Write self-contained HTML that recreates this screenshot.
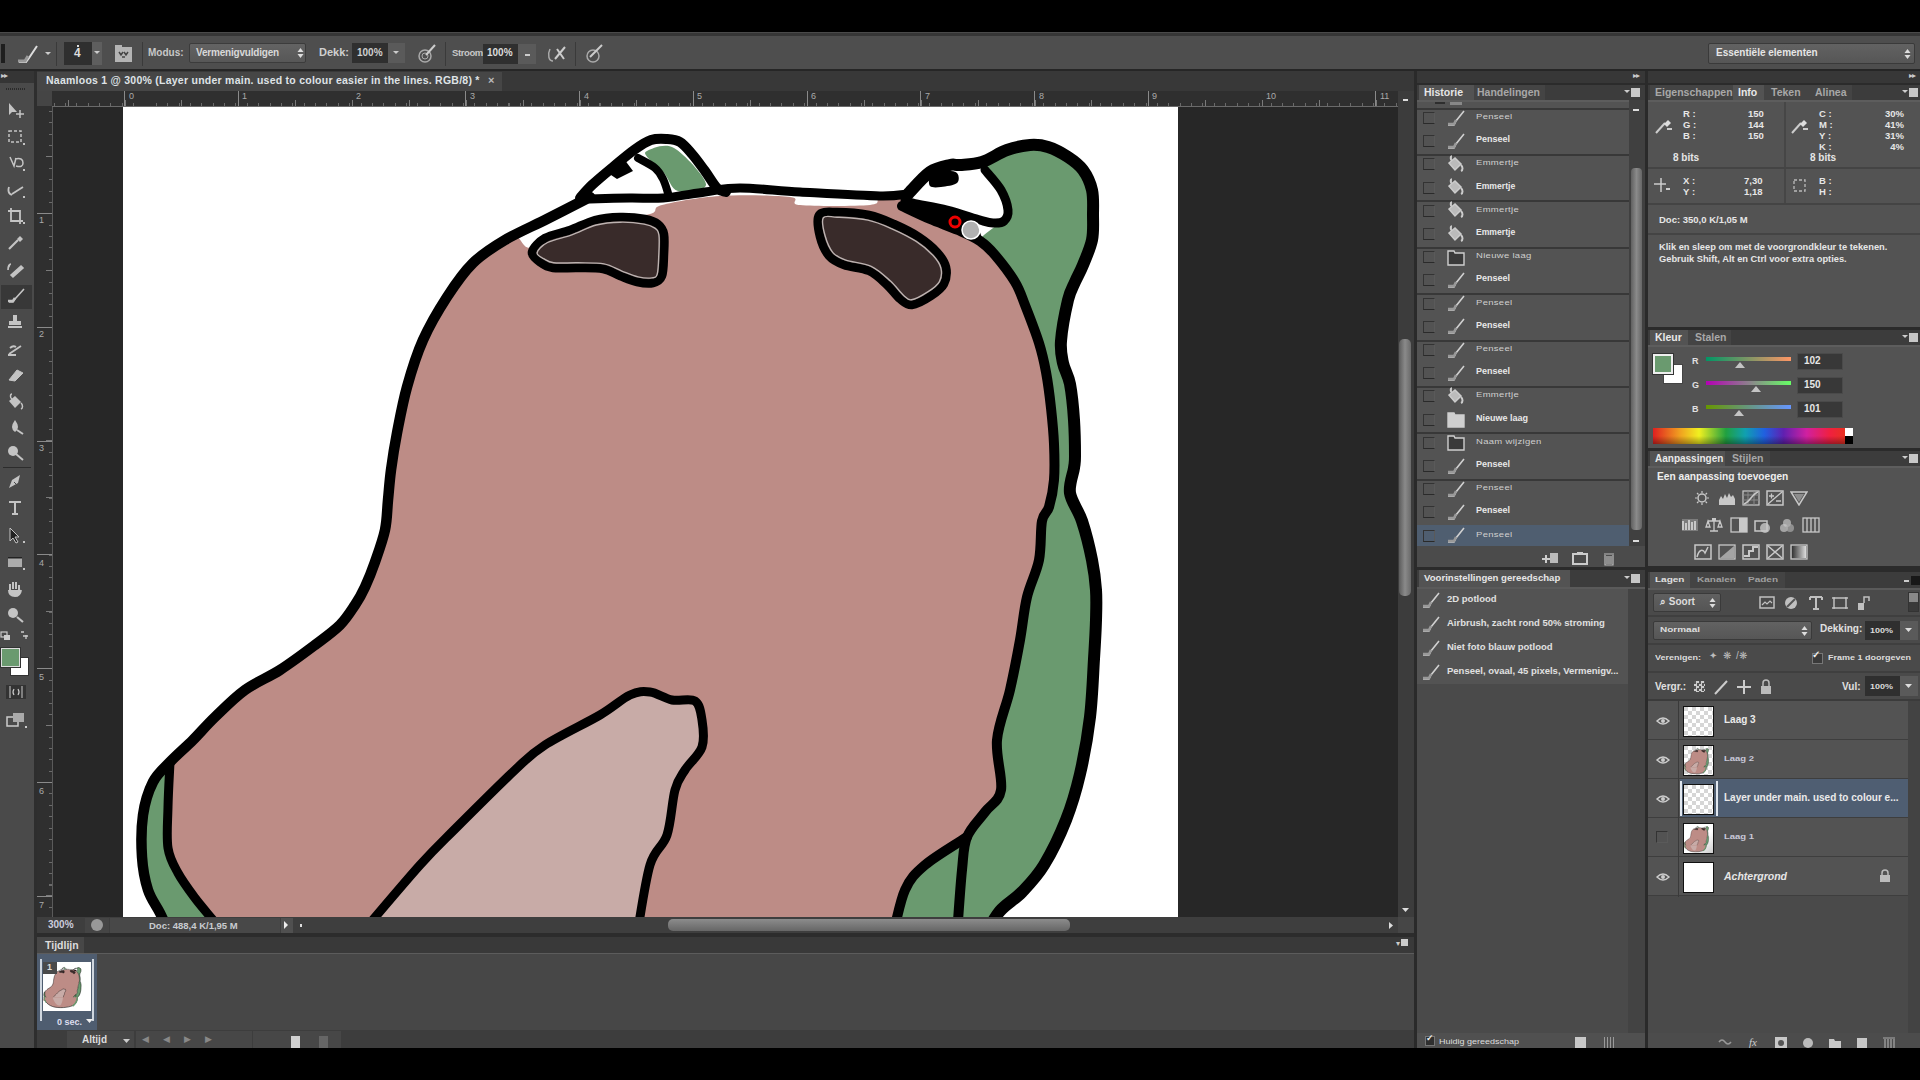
<!DOCTYPE html>
<html><head><meta charset="utf-8">
<style>
*{margin:0;padding:0;box-sizing:border-box}
html,body{width:1920px;height:1080px;overflow:hidden;background:#000;font-family:"Liberation Sans",sans-serif;color:#ddd;font-size:11px}
.a{position:absolute}
.t{position:absolute;white-space:nowrap;line-height:1}
</style></head><body>
<!-- options bar -->
<div class="a" style="left:0;top:32px;width:1920px;height:39px;background:#4e4e4e;border-bottom:2px solid #262626"></div>
<div class="a" style="left:0;top:32px;width:1920px;height:1px;background:#4a4a4a"></div>
<div class="a" style="left:0;top:33px;width:1920px;height:3px;background:#363636"></div>
<div class="a" style="left:1px;top:44px;width:4px;height:19px;background:#1e1e1e"></div>
<svg class="a" style="left:16px;top:43px" width="40" height="22"><path d="M3,19 L10,19 L13,15 L21,3" stroke="#ddd" stroke-width="2" fill="none"/><path d="M2,18 L9,18 L12,13" stroke="#999" stroke-width="3" fill="none"/><path d="M29,9 h6 l-3,3z" fill="#ccc"/></svg>
<div class="a" style="left:56px;top:42px;width:1px;height:24px;background:#3a3a3a"></div>
<div class="a" style="left:64px;top:42px;width:28px;height:23px;background:#2f2f2f"></div>
<div class="a" style="left:92px;top:42px;width:10px;height:23px;background:#5e5e5e"></div>
<div class="t" style="left:74px;top:47px;font-size:12px;font-weight:bold;color:#ddd">4</div>
<div class="a" style="left:77px;top:45px;width:2px;height:2px;background:#ddd"></div>
<svg class="a" style="left:94px;top:51px" width="8" height="6"><path d="M0,0h6l-3,3z" fill="#ccc"/></svg>

<svg class="a" style="left:115px;top:45px" width="17" height="17"><rect x="0" y="2" width="17" height="15" fill="#b4b4b4"/><rect x="0" y="0" width="7" height="3" fill="#b4b4b4"/><path d="M4,7 l2,3 2,-3 M9,7 l2,3 2,-3 M7,12 h3" stroke="#444" stroke-width="1.5" fill="none"/></svg>
<div class="a" style="left:142px;top:42px;width:1px;height:24px;background:#3a3a3a"></div>
<div class="t" style="left:148px;top:48px;font-size:10px;font-weight:bold;color:#c8c8c8">Modus:</div>
<div class="a" style="left:189px;top:43px;width:117px;height:20px;background:linear-gradient(#636363,#575757);border:1px solid #3c3c3c;border-radius:2px"></div>
<div class="t" style="left:196px;top:48px;font-size:10px;font-weight:bold;color:#d8d8d8;letter-spacing:-.2px">Vermenigvuldigen</div>
<svg class="a" style="left:297px;top:47px" width="7" height="12"><path d="M0.5,5 L3.5,1 L6.5,5z M0.5,7 L3.5,11 L6.5,7z" fill="#ddd"/></svg>
<div class="t" style="left:319px;top:47px;font-size:11px;font-weight:bold;color:#d0d0d0">Dekk:</div>
<div class="a" style="left:352px;top:43px;width:36px;height:20px;background:#2f2f2f"></div>
<div class="a" style="left:388px;top:43px;width:17px;height:20px;background:#5a5a5a"></div>
<div class="t" style="left:357px;top:48px;font-size:10px;font-weight:bold;color:#cfcfcf">100%</div>
<svg class="a" style="left:393px;top:51px" width="8" height="6"><path d="M0,0h6l-3,3z" fill="#ccc"/></svg>
<svg class="a" style="left:416px;top:43px" width="22" height="22"><circle cx="9" cy="13" r="6" stroke="#aaa" stroke-width="1.5" fill="none"/><circle cx="9" cy="13" r="3" stroke="#aaa" stroke-width="1" fill="none"/><path d="M10,12 L19,2" stroke="#ccc" stroke-width="2"/></svg>
<div class="a" style="left:445px;top:42px;width:1px;height:24px;background:#3a3a3a"></div>
<div class="t" style="left:452px;top:48px;font-size:9.5px;font-weight:bold;color:#c8c8c8;letter-spacing:-.4px">Stroom:</div>
<div class="a" style="left:483px;top:44px;width:35px;height:20px;background:#2f2f2f"></div>
<div class="a" style="left:518px;top:44px;width:18px;height:20px;background:#5a5a5a"></div>
<div class="t" style="left:487px;top:48px;font-size:10px;font-weight:bold;color:#dcdcdc">100%</div>
<div class="a" style="left:525px;top:54px;width:5px;height:2px;background:#ccc"></div>
<svg class="a" style="left:547px;top:43px" width="22" height="22"><path d="M3,6 C0,12 2,18 6,18" stroke="#aaa" stroke-width="1.5" fill="none"/><path d="M8,16 L18,4 M10,6 L17,16" stroke="#ccc" stroke-width="2"/></svg>
<div class="a" style="left:575px;top:42px;width:1px;height:24px;background:#3a3a3a"></div>
<svg class="a" style="left:584px;top:43px" width="22" height="22"><circle cx="9" cy="13" r="6" stroke="#aaa" stroke-width="1.5" fill="none"/><path d="M6,14 L18,2" stroke="#ccc" stroke-width="2"/></svg>
<div class="a" style="left:1708px;top:43px;width:207px;height:21px;background:linear-gradient(#626262,#565656);border:1px solid #3a3a3a;border-radius:2px"></div>
<div class="t" style="left:1716px;top:48px;font-size:10px;font-weight:bold;color:#e6e6e6">Essentiële elementen</div>
<svg class="a" style="left:1904px;top:48px" width="7" height="12"><path d="M0.5,5 L3.5,1 L6.5,5z M0.5,7 L3.5,11 L6.5,7z" fill="#ddd"/></svg>

<!-- toolbar -->
<div class="a" style="left:0;top:71px;width:34px;height:977px;background:#4a4a4a"></div>
<div class="a" style="left:0;top:71px;width:34px;height:12px;background:#353535"></div>
<div class="t" style="left:1px;top:72px;font-size:8px;color:#ccc;letter-spacing:-1px">&#9656;&#9656;</div>
<div class="a" style="left:6px;top:88px;width:19px;height:2px;background:repeating-linear-gradient(90deg,#2a2a2a 0 1px,transparent 1px 2px)"></div>
<div class="a" style="left:34px;top:71px;width:3px;height:977px;background:#2e2e2e"></div>
<div class="a" style="left:1px;top:285px;width:31px;height:24px;background:#383838"></div>
<div class="a" style="left:3px;top:467px;width:28px;height:1px;background:#2c2c2c"></div>
<svg class="a" style="left:6px;top:101px" width="20" height="18"><path d="M3,2 v12 l3,-3 h5z" fill="#c4c4c4"/><path d="M10,13 h8 M14,9 v8" stroke="#c4c4c4" stroke-width="1.5"/></svg>
<svg class="a" style="left:6px;top:128px" width="20" height="18"><rect x="3" y="3" width="12" height="11" fill="none" stroke="#c4c4c4" stroke-width="1.5" stroke-dasharray="3,2"/><rect x="17" y="15" width="2" height="2" fill="#c4c4c4"/></svg>
<svg class="a" style="left:6px;top:154px" width="20" height="18"><path d="M4,3 l4,9 l2,-8 M9,5 q8,-2 8,4 q0,5 -7,3" stroke="#c4c4c4" stroke-width="1.5" fill="none"/><rect x="17" y="15" width="2" height="2" fill="#c4c4c4"/></svg>
<svg class="a" style="left:6px;top:181px" width="20" height="18"><path d="M3,6 q-2,6 3,8 M6,13 l11,-7" stroke="#c4c4c4" stroke-width="1.8" fill="none"/><rect x="17" y="15" width="2" height="2" fill="#c4c4c4"/></svg>
<svg class="a" style="left:6px;top:207px" width="20" height="18"><path d="M5,1 v13 h12 M2,4 h12 v13" stroke="#c4c4c4" stroke-width="1.8" fill="none"/><rect x="17" y="15" width="2" height="2" fill="#c4c4c4"/></svg>
<svg class="a" style="left:6px;top:234px" width="20" height="18"><path d="M3,15 l9,-9" stroke="#c4c4c4" stroke-width="2.2"/><path d="M11,5 l3,-3 3,3 -3,3z" fill="#c4c4c4"/></svg>
<svg class="a" style="left:6px;top:261px" width="20" height="18"><path d="M2,9 q0,-6 3,-6 M5,14 l10,-9 2,2 -10,9z" stroke="#c4c4c4" stroke-width="1.6" fill="#c4c4c4"/></svg>
<svg class="a" style="left:6px;top:287px" width="20" height="18"><path d="M3,15 l4,0 2,-3 9,-10" stroke="#c4c4c4" stroke-width="1.6" fill="none"/><path d="M2,14 h5 l2,-3" stroke="#c4c4c4" stroke-width="2.5" fill="none"/></svg>
<svg class="a" style="left:6px;top:313px" width="20" height="18"><rect x="7" y="2" width="4" height="6" fill="#c4c4c4"/><rect x="3" y="8" width="12" height="4" fill="#c4c4c4"/><rect x="2" y="13" width="14" height="2" fill="#c4c4c4"/></svg>
<svg class="a" style="left:6px;top:340px" width="20" height="18"><path d="M3,14 l12,-8 M4,8 q3,-3 6,-1" stroke="#c4c4c4" stroke-width="1.8" fill="none"/><rect x="2" y="14" width="8" height="2" fill="#c4c4c4"/></svg>
<svg class="a" style="left:6px;top:366px" width="20" height="18"><path d="M3,14 l8,-10 6,3 -8,8z" fill="#c4c4c4" stroke="#c4c4c4" stroke-width="1"/></svg>
<svg class="a" style="left:6px;top:392px" width="20" height="18"><path d="M3,9 L9,4 L15,10 L9,16z" fill="#c4c4c4"/><path d="M6,2 C4,2 4,6 6,7 M15,11 C17,13 17,16 15,17" stroke="#c4c4c4" stroke-width="1.5" fill="none"/></svg>
<svg class="a" style="left:6px;top:418px" width="20" height="18"><path d="M9,2 q-6,8 0,12 q6,-4 0,-12z" fill="#c4c4c4"/><path d="M11,12 l6,4" stroke="#c4c4c4" stroke-width="2"/></svg>
<svg class="a" style="left:6px;top:444px" width="20" height="18"><circle cx="7" cy="7" r="5" fill="#c4c4c4"/><path d="M10,10 l7,6" stroke="#c4c4c4" stroke-width="2"/></svg>
<svg class="a" style="left:6px;top:473px" width="20" height="18"><path d="M3,15 l3,-8 8,-5 -2,8z" fill="#c4c4c4"/><path d="M8,9 l2,2" stroke="#4a4a4a" stroke-width="1" fill="#c4c4c4"/></svg>
<svg class="a" style="left:6px;top:499px" width="20" height="18"><path d="M3,3 h12 M9,3 v12 M6,15 h6" stroke="#c4c4c4" stroke-width="2" fill="#c4c4c4"/></svg>
<svg class="a" style="left:6px;top:526px" width="20" height="18"><path d="M4,2 v13 l3,-3 l3,5 2,-1 -3,-5 h4z" fill="#222" stroke="#c4c4c4" stroke-width="1" /><rect x="17" y="15" width="2" height="2" fill="#c4c4c4"/></svg>
<svg class="a" style="left:6px;top:553px" width="20" height="18"><rect x="2" y="5" width="14" height="9" fill="#c4c4c4" opacity=".8"/><rect x="2" y="4" width="14" height="1.5" fill="#222"/><rect x="17" y="15" width="2" height="2" fill="#c4c4c4"/></svg>
<svg class="a" style="left:6px;top:580px" width="20" height="18"><path d="M4,10 v-6 M7,9 v-7 M10,9 v-7 M13,10 v-5 M3,10 q0,6 6,6 q5,0 6,-6" stroke="#c4c4c4" stroke-width="2" fill="#c4c4c4"/></svg>
<svg class="a" style="left:6px;top:606px" width="20" height="18"><circle cx="7" cy="7" r="5" fill="#c4c4c4"/><path d="M11,11 l6,5" stroke="#c4c4c4" stroke-width="2.2"/></svg>
<svg class="a" style="left:0px;top:630px" width="34" height="14"><rect x="1" y="2" width="6" height="5" fill="none" stroke="#ccc" stroke-width="1.2"/><rect x="4" y="5" width="6" height="5" fill="#ccc"/><path d="M21,2 h3 M26,5 v4 M23,6 h5" stroke="#ccc" stroke-width="1.3"/></svg>
<div class="a" style="left:10px;top:657px;width:19px;height:19px;background:#fff;border:1px solid #333"></div>
<div class="a" style="left:1px;top:648px;width:19px;height:19px;background:#6a9a6f;border:1px solid #ddd;box-shadow:0 0 0 1px #333"></div>
<svg class="a" style="left:5px;top:684px" width="24" height="16"><rect x="1" y="1" width="20" height="14" fill="#333"/><path d="M5,2 v12 M17,2 v12" stroke="#ccc" stroke-width="1"/><path d="M9,5 q-2,3 0,6 M13,5 q2,3 0,6" stroke="#ccc" stroke-width="1.2" fill="none"/></svg>
<svg class="a" style="left:5px;top:711px" width="24" height="18"><rect x="2" y="6" width="11" height="9" fill="none" stroke="#ccc" stroke-width="1.5"/><rect x="8" y="2" width="11" height="9" fill="#aaa"/><rect x="20" y="15" width="2" height="2" fill="#ccc"/></svg>

<!-- document area -->
<div class="a" style="left:37px;top:71px;width:1377px;height:20px;background:#383838"></div>
<div class="a" style="left:37px;top:72px;width:465px;height:19px;background:#464646"></div>
<div class="t" style="left:46px;top:75px;font-size:10.5px;font-weight:bold;color:#dfe3e6;letter-spacing:.25px">Naamloos 1 @ 300% (Layer under main. used to colour easier in the lines. RGB/8) *</div>
<div class="t" style="left:488px;top:75px;font-size:11px;font-weight:bold;color:#bbb">&#215;</div>
<div class="a" style="left:37px;top:91px;width:1361px;height:16px;background:#2f2f2f"></div>
<div class="a" style="left:53px;top:103px;width:1345px;height:3px;background:repeating-linear-gradient(90deg,transparent 0 0.5px,#6a6a6a 0.5px 1.5px,transparent 1.5px 11.375px)"></div>
<div class="a" style="left:53px;top:100px;width:1345px;height:6px;background:repeating-linear-gradient(90deg,transparent 0 14.7px,#7a7a7a 14.7px 15.7px,transparent 15.7px 56.875px)"></div>
<div class="a" style="left:53px;top:91px;width:1345px;height:15px;background:repeating-linear-gradient(90deg,transparent 0 71px,#8a8a8a 71px 72px,transparent 72px 113.75px)"></div>
<div class="a" style="left:37px;top:91px;width:15px;height:15px;background:#454545"></div>
<div class="a" style="left:52px;top:106px;width:1346px;height:1px;background:#6a6a6a"></div>
<div class="a" style="left:37px;top:107px;width:15px;height:810px;background:#2f2f2f"></div>
<div class="a" style="left:49px;top:107px;width:3px;height:810px;background:repeating-linear-gradient(180deg,transparent 0 4px,#6a6a6a 4px 5px,transparent 5px 11.375px)"></div>
<div class="a" style="left:46px;top:107px;width:6px;height:810px;background:repeating-linear-gradient(180deg,transparent 0 49px,#7a7a7a 49px 50px,transparent 50px 56.875px)"></div>
<div class="a" style="left:37px;top:107px;width:15px;height:810px;background:repeating-linear-gradient(180deg,transparent 0 106px,#8a8a8a 106px 107px,transparent 107px 113.75px)"></div>
<div class="a" style="left:52px;top:107px;width:1px;height:810px;background:#5a5a5a"></div>
<div class="a" style="left:53px;top:107px;width:1345px;height:810px;background:#272727"></div>
<div class="t" style="left:129px;top:92px;font-size:9px;color:#aaa">0</div>
<div class="t" style="left:242px;top:92px;font-size:9px;color:#aaa">1</div>
<div class="t" style="left:356px;top:92px;font-size:9px;color:#aaa">2</div>
<div class="t" style="left:470px;top:92px;font-size:9px;color:#aaa">3</div>
<div class="t" style="left:584px;top:92px;font-size:9px;color:#aaa">4</div>
<div class="t" style="left:697px;top:92px;font-size:9px;color:#aaa">5</div>
<div class="t" style="left:811px;top:92px;font-size:9px;color:#aaa">6</div>
<div class="t" style="left:925px;top:92px;font-size:9px;color:#aaa">7</div>
<div class="t" style="left:1039px;top:92px;font-size:9px;color:#aaa">8</div>
<div class="t" style="left:1152px;top:92px;font-size:9px;color:#aaa">9</div>
<div class="t" style="left:1266px;top:92px;font-size:9px;color:#aaa">10</div>
<div class="t" style="left:1380px;top:92px;font-size:9px;color:#aaa">11</div>
<div class="t" style="left:39px;top:216px;font-size:9px;color:#aaa">1</div>
<div class="t" style="left:39px;top:330px;font-size:9px;color:#aaa">2</div>
<div class="t" style="left:39px;top:444px;font-size:9px;color:#aaa">3</div>
<div class="t" style="left:39px;top:559px;font-size:9px;color:#aaa">4</div>
<div class="t" style="left:39px;top:673px;font-size:9px;color:#aaa">5</div>
<div class="t" style="left:39px;top:787px;font-size:9px;color:#aaa">6</div>
<div class="t" style="left:39px;top:901px;font-size:9px;color:#aaa">7</div>
<div class="a" style="left:1398px;top:91px;width:16px;height:826px;background:#3c3c3c"></div>
<div class="a" style="left:1399px;top:339px;width:12px;height:257px;border-radius:5px;background:linear-gradient(90deg,#5c5c5c,#8a8a8a 50%,#6a6a6a)"></div>
<div class="a" style="left:1403px;top:99px;width:5px;height:2px;background:#ddd"></div>
<svg class="a" style="left:1402px;top:908px" width="8" height="6"><path d="M0,0h7l-3.5,4z" fill="#ddd"/></svg>
<div class="a" style="left:37px;top:917px;width:1361px;height:16px;background:#3e3e3e"></div>
<div class="a" style="left:1398px;top:917px;width:16px;height:16px;background:#464646"></div>
<div class="a" style="left:668px;top:919px;width:402px;height:12px;border-radius:5px;background:linear-gradient(#8c8c8c,#666)"></div>
<svg class="a" style="left:1389px;top:922px" width="6" height="8"><path d="M0,0v7l4,-3.5z" fill="#ddd"/></svg>
<div class="t" style="left:48px;top:920px;font-size:10px;font-weight:bold;color:#ccd">300%</div>
<div class="a" style="left:85px;top:918px;width:24px;height:15px;background:#454545"></div>
<div class="a" style="left:91px;top:919px;width:12px;height:12px;border-radius:50%;background:#999"></div>
<div class="a" style="left:110px;top:918px;width:170px;height:15px;background:#484848"></div>
<div class="t" style="left:149px;top:921px;font-size:9.5px;font-weight:bold;color:#c9ccd0">Doc: 488,4 K/1,95 M</div>
<div class="a" style="left:281px;top:918px;width:12px;height:15px;background:#505050"></div>
<svg class="a" style="left:284px;top:921px" width="6" height="8"><path d="M0,0v8l4,-4z" fill="#eee"/></svg>
<div class="a" style="left:300px;top:924px;width:2px;height:3px;background:#ddd"></div>
<div class="a" style="left:37px;top:933px;width:1377px;height:4px;background:#2c2c2c"></div>
<!-- timeline -->
<div class="a" style="left:37px;top:937px;width:1377px;height:16px;background:#393939"></div>
<div class="a" style="left:37px;top:937px;width:47px;height:16px;background:#474747"></div>
<div class="t" style="left:45px;top:940px;font-size:10.5px;font-weight:bold;color:#ddd">Tijdlijn</div>
<div class="t" style="left:1396px;top:939px;font-size:8px;color:#ccc">&#9662;<span style="display:inline-block;width:7px;height:7px;background:#ccc;margin-left:1px"></span></div>
<div class="a" style="left:37px;top:953px;width:1377px;height:1px;background:#5c5c5c"></div>
<div class="a" style="left:37px;top:954px;width:1377px;height:76px;background:#474747"></div>
<div class="a" style="left:37px;top:954px;width:60px;height:76px;background:#4f5d70"></div>
<div class="a" style="left:40px;top:959px;width:2px;height:62px;background:#cfd6de"></div>
<div class="a" style="left:92px;top:959px;width:2px;height:62px;background:#cfd6de"></div>
<div class="a" style="left:43px;top:962px;width:48px;height:49px;background:#fff"></div>
<svg class="a" style="left:43px;top:962px" width="48" height="49" viewBox="120 2 1230 1256" preserveAspectRatio="none"><use href="#frog"/><path d="M146,905 C150,1010 260,1130 430,1160 C620,1190 820,1160 920,1100 C975,1060 1000,990 1005,905 Z" fill="#bd8c86"/><path d="M146,910 C150,1010 260,1130 430,1160 C620,1190 820,1160 920,1100 C975,1060 1000,990 1005,910" fill="none" stroke="#000" stroke-width="14"/><path d="M1000,905 C990,1010 940,1090 880,1130" fill="none" stroke="#6a9a6f" stroke-width="40"/><path d="M366,910 L634,910 C620,1000 600,1080 560,1120 C480,1120 420,1060 366,910Z" fill="#c8aba7"/><path d="M146,905 C148,960 170,1000 200,1040" fill="none" stroke="#6a9a6f" stroke-width="30"/></svg>
<div class="a" style="left:43px;top:962px;width:14px;height:12px;background:#4a4a4a"></div>
<div class="t" style="left:47px;top:963px;font-size:9px;font-weight:bold;color:#ddd">1</div>
<div class="t" style="left:57px;top:1018px;font-size:9px;font-weight:bold;color:#dde">0 sec.</div>
<svg class="a" style="left:86px;top:1019px" width="8" height="6"><path d="M0,0h7l-3.5,4z" fill="#eee"/></svg>
<div class="a" style="left:37px;top:1030px;width:1377px;height:18px;background:#3d3d3d"></div>
<div class="a" style="left:67px;top:1031px;width:67px;height:17px;background:#474747"></div>
<div class="t" style="left:82px;top:1035px;font-size:10px;font-weight:bold;color:#ddd">Altijd</div>
<svg class="a" style="left:123px;top:1039px" width="8" height="6"><path d="M0,0h7l-3.5,4z" fill="#ccc"/></svg>
<div class="a" style="left:136px;top:1031px;width:116px;height:17px;background:#474747"></div>
<div class="a" style="left:253px;top:1031px;width:88px;height:17px;background:#474747"></div>
<div class="t" style="left:142px;top:1035px;font-size:9px;color:#888;letter-spacing:14px">&#9664;&#9664;&#9654;&#9654;</div>
<div class="a" style="left:291px;top:1036px;width:9px;height:12px;background:#cfcfcf"></div>
<div class="a" style="left:319px;top:1036px;width:9px;height:12px;background:#666"></div>
<div class="a" style="left:1414px;top:71px;width:3px;height:977px;background:#2a2a2a"></div>
<!-- history column -->
<div class="a" style="left:1417px;top:71px;width:228px;height:977px;background:#4a4a4a"></div>
<div class="a" style="left:1417px;top:71px;width:228px;height:12px;background:#373737"></div>
<div class="t" style="left:1633px;top:72px;font-size:8px;color:#ccc;letter-spacing:-1px">&#9656;&#9656;</div>
<div class="a" style="left:1417px;top:83px;width:228px;height:2px;background:#2b2b2b"></div>
<div class="a" style="left:1417px;top:85px;width:228px;height:15px;background:#3c3c3c"></div>
<div class="a" style="left:1419px;top:85px;width:55px;height:16px;background:#535353"></div>
<div class="a" style="left:1474px;top:85px;width:71px;height:15px;background:#444"></div>
<div class="t" style="left:1424px;top:87px;font-size:10.5px;font-weight:bold;color:#e6e6e6">Historie</div>
<div class="t" style="left:1477px;top:87px;font-size:10.5px;font-weight:bold;color:#a8a8a8">Handelingen</div>
<svg class="a" style="left:1624px;top:88px" width="18" height="10"><path d="M0,2h6l-3,3z" fill="#ccc"/><rect x="7" y="0" width="9" height="9" fill="#c8c8c8"/></svg>
<div class="a" style="left:1417px;top:100px;width:212px;height:446px;background:#535353"></div>
<div class="a" style="left:1417px;top:100px;width:212px;height:2px;background:#5d5d5d"></div>
<div class="a" style="left:1435px;top:102px;width:10px;height:2px;background:#2e2e2e"></div>
<div class="a" style="left:1450px;top:102px;width:12px;height:3px;background:#888"></div>
<div class="a" style="left:1417px;top:108px;width:212px;height:2px;background:#383838"></div>
<div class="a" style="left:1417px;top:154px;width:212px;height:2px;background:#383838"></div>
<div class="a" style="left:1417px;top:200px;width:212px;height:2px;background:#383838"></div>
<div class="a" style="left:1417px;top:247px;width:212px;height:2px;background:#383838"></div>
<div class="a" style="left:1417px;top:293px;width:212px;height:2px;background:#383838"></div>
<div class="a" style="left:1417px;top:340px;width:212px;height:2px;background:#383838"></div>
<div class="a" style="left:1417px;top:386px;width:212px;height:2px;background:#383838"></div>
<div class="a" style="left:1417px;top:432px;width:212px;height:2px;background:#383838"></div>
<div class="a" style="left:1417px;top:479px;width:212px;height:2px;background:#383838"></div>
<div class="a" style="left:1417px;top:525px;width:212px;height:2px;background:#383838"></div>
<div class="a" style="left:1417px;top:525px;width:212px;height:21px;background:#4f5e70"></div>
<div class="a" style="left:1423px;top:112px;width:12px;height:12px;border:1px solid #333;border-right-color:#5a5a5a;border-bottom-color:#2a2a2a"></div>
<svg class="a" style="left:1446px;top:109px" width="20" height="18"><path d="M2,16 L8,16 L10,12 L18,2" stroke="#d0d0d0" stroke-width="1.6" fill="none"/><path d="M2,15 L8,15 L10,11" stroke="#999" stroke-width="2.5" fill="none"/></svg>
<div class="t" style="left:1476px;top:112px;font-size:9.5px;color:#cfcfcf;letter-spacing:.3px;transform:scaleY(.7)">Penseel</div>
<div class="a" style="left:1423px;top:135px;width:12px;height:12px;border:1px solid #333;border-right-color:#5a5a5a;border-bottom-color:#2a2a2a"></div>
<svg class="a" style="left:1446px;top:132px" width="20" height="18"><path d="M2,16 L8,16 L10,12 L18,2" stroke="#d0d0d0" stroke-width="1.6" fill="none"/><path d="M2,15 L8,15 L10,11" stroke="#999" stroke-width="2.5" fill="none"/></svg>
<div class="t" style="left:1476px;top:135px;font-size:9px;font-weight:bold;color:#e8e8e8">Penseel</div>
<div class="a" style="left:1423px;top:158px;width:12px;height:12px;border:1px solid #333;border-right-color:#5a5a5a;border-bottom-color:#2a2a2a"></div>
<svg class="a" style="left:1446px;top:154px" width="20" height="20"><path d="M6,2 C4,2 4,6 6,7 M3,9 L9,4 L15,10 L9,16z" stroke="#ccc" stroke-width="1.5" fill="#bbb"/><path d="M15,11 C17,13 17,16 15,17" stroke="#ccc" stroke-width="2" fill="none"/></svg>
<div class="t" style="left:1476px;top:158px;font-size:9.5px;color:#cfcfcf;letter-spacing:.3px;transform:scaleY(.7)">Emmertje</div>
<div class="a" style="left:1423px;top:182px;width:12px;height:12px;border:1px solid #333;border-right-color:#5a5a5a;border-bottom-color:#2a2a2a"></div>
<svg class="a" style="left:1446px;top:177px" width="20" height="20"><path d="M6,2 C4,2 4,6 6,7 M3,9 L9,4 L15,10 L9,16z" stroke="#ccc" stroke-width="1.5" fill="#bbb"/><path d="M15,11 C17,13 17,16 15,17" stroke="#ccc" stroke-width="2" fill="none"/></svg>
<div class="t" style="left:1476px;top:182px;font-size:8.6px;font-weight:bold;color:#e8e8e8">Emmertje</div>
<div class="a" style="left:1423px;top:205px;width:12px;height:12px;border:1px solid #333;border-right-color:#5a5a5a;border-bottom-color:#2a2a2a"></div>
<svg class="a" style="left:1446px;top:200px" width="20" height="20"><path d="M6,2 C4,2 4,6 6,7 M3,9 L9,4 L15,10 L9,16z" stroke="#ccc" stroke-width="1.5" fill="#bbb"/><path d="M15,11 C17,13 17,16 15,17" stroke="#ccc" stroke-width="2" fill="none"/></svg>
<div class="t" style="left:1476px;top:205px;font-size:9.5px;color:#cfcfcf;letter-spacing:.3px;transform:scaleY(.7)">Emmertje</div>
<div class="a" style="left:1423px;top:228px;width:12px;height:12px;border:1px solid #333;border-right-color:#5a5a5a;border-bottom-color:#2a2a2a"></div>
<svg class="a" style="left:1446px;top:224px" width="20" height="20"><path d="M6,2 C4,2 4,6 6,7 M3,9 L9,4 L15,10 L9,16z" stroke="#ccc" stroke-width="1.5" fill="#bbb"/><path d="M15,11 C17,13 17,16 15,17" stroke="#ccc" stroke-width="2" fill="none"/></svg>
<div class="t" style="left:1476px;top:228px;font-size:8.6px;font-weight:bold;color:#e8e8e8">Emmertje</div>
<div class="a" style="left:1423px;top:251px;width:12px;height:12px;border:1px solid #333;border-right-color:#5a5a5a;border-bottom-color:#2a2a2a"></div>
<svg class="a" style="left:1446px;top:248px" width="20" height="18"><path d="M2,3 h6 l1,2 h9 v12 h-16z" stroke="#cfcfcf" stroke-width="1.4" fill="#3a3a3a"/></svg>
<div class="t" style="left:1476px;top:251px;font-size:9.5px;color:#cfcfcf;letter-spacing:.3px;transform:scaleY(.7)">Nieuwe laag</div>
<div class="a" style="left:1423px;top:274px;width:12px;height:12px;border:1px solid #333;border-right-color:#5a5a5a;border-bottom-color:#2a2a2a"></div>
<svg class="a" style="left:1446px;top:271px" width="20" height="18"><path d="M2,16 L8,16 L10,12 L18,2" stroke="#d0d0d0" stroke-width="1.6" fill="none"/><path d="M2,15 L8,15 L10,11" stroke="#999" stroke-width="2.5" fill="none"/></svg>
<div class="t" style="left:1476px;top:274px;font-size:9px;font-weight:bold;color:#e8e8e8">Penseel</div>
<div class="a" style="left:1423px;top:298px;width:12px;height:12px;border:1px solid #333;border-right-color:#5a5a5a;border-bottom-color:#2a2a2a"></div>
<svg class="a" style="left:1446px;top:294px" width="20" height="18"><path d="M2,16 L8,16 L10,12 L18,2" stroke="#d0d0d0" stroke-width="1.6" fill="none"/><path d="M2,15 L8,15 L10,11" stroke="#999" stroke-width="2.5" fill="none"/></svg>
<div class="t" style="left:1476px;top:298px;font-size:9.5px;color:#cfcfcf;letter-spacing:.3px;transform:scaleY(.7)">Penseel</div>
<div class="a" style="left:1423px;top:321px;width:12px;height:12px;border:1px solid #333;border-right-color:#5a5a5a;border-bottom-color:#2a2a2a"></div>
<svg class="a" style="left:1446px;top:317px" width="20" height="18"><path d="M2,16 L8,16 L10,12 L18,2" stroke="#d0d0d0" stroke-width="1.6" fill="none"/><path d="M2,15 L8,15 L10,11" stroke="#999" stroke-width="2.5" fill="none"/></svg>
<div class="t" style="left:1476px;top:321px;font-size:9px;font-weight:bold;color:#e8e8e8">Penseel</div>
<div class="a" style="left:1423px;top:344px;width:12px;height:12px;border:1px solid #333;border-right-color:#5a5a5a;border-bottom-color:#2a2a2a"></div>
<svg class="a" style="left:1446px;top:341px" width="20" height="18"><path d="M2,16 L8,16 L10,12 L18,2" stroke="#d0d0d0" stroke-width="1.6" fill="none"/><path d="M2,15 L8,15 L10,11" stroke="#999" stroke-width="2.5" fill="none"/></svg>
<div class="t" style="left:1476px;top:344px;font-size:9.5px;color:#cfcfcf;letter-spacing:.3px;transform:scaleY(.7)">Penseel</div>
<div class="a" style="left:1423px;top:367px;width:12px;height:12px;border:1px solid #333;border-right-color:#5a5a5a;border-bottom-color:#2a2a2a"></div>
<svg class="a" style="left:1446px;top:364px" width="20" height="18"><path d="M2,16 L8,16 L10,12 L18,2" stroke="#d0d0d0" stroke-width="1.6" fill="none"/><path d="M2,15 L8,15 L10,11" stroke="#999" stroke-width="2.5" fill="none"/></svg>
<div class="t" style="left:1476px;top:367px;font-size:9px;font-weight:bold;color:#e8e8e8">Penseel</div>
<div class="a" style="left:1423px;top:390px;width:12px;height:12px;border:1px solid #333;border-right-color:#5a5a5a;border-bottom-color:#2a2a2a"></div>
<svg class="a" style="left:1446px;top:386px" width="20" height="20"><path d="M6,2 C4,2 4,6 6,7 M3,9 L9,4 L15,10 L9,16z" stroke="#ccc" stroke-width="1.5" fill="#bbb"/><path d="M15,11 C17,13 17,16 15,17" stroke="#ccc" stroke-width="2" fill="none"/></svg>
<div class="t" style="left:1476px;top:390px;font-size:9.5px;color:#cfcfcf;letter-spacing:.3px;transform:scaleY(.7)">Emmertje</div>
<div class="a" style="left:1423px;top:414px;width:12px;height:12px;border:1px solid #333;border-right-color:#5a5a5a;border-bottom-color:#2a2a2a"></div>
<svg class="a" style="left:1446px;top:410px" width="20" height="18"><path d="M2,3 h6 l1,2 h9 v12 h-16z" stroke="#cfcfcf" stroke-width="1.4" fill="#cfcfcf"/></svg>
<div class="t" style="left:1476px;top:414px;font-size:9px;font-weight:bold;color:#e8e8e8">Nieuwe laag</div>
<div class="a" style="left:1423px;top:437px;width:12px;height:12px;border:1px solid #333;border-right-color:#5a5a5a;border-bottom-color:#2a2a2a"></div>
<svg class="a" style="left:1446px;top:433px" width="20" height="18"><path d="M2,3 h6 l1,2 h9 v12 h-16z" stroke="#cfcfcf" stroke-width="1.4" fill="#3a3a3a"/></svg>
<div class="t" style="left:1476px;top:437px;font-size:9.5px;color:#cfcfcf;letter-spacing:.3px;transform:scaleY(.7)">Naam wijzigen</div>
<div class="a" style="left:1423px;top:460px;width:12px;height:12px;border:1px solid #333;border-right-color:#5a5a5a;border-bottom-color:#2a2a2a"></div>
<svg class="a" style="left:1446px;top:457px" width="20" height="18"><path d="M2,16 L8,16 L10,12 L18,2" stroke="#d0d0d0" stroke-width="1.6" fill="none"/><path d="M2,15 L8,15 L10,11" stroke="#999" stroke-width="2.5" fill="none"/></svg>
<div class="t" style="left:1476px;top:460px;font-size:9px;font-weight:bold;color:#e8e8e8">Penseel</div>
<div class="a" style="left:1423px;top:483px;width:12px;height:12px;border:1px solid #333;border-right-color:#5a5a5a;border-bottom-color:#2a2a2a"></div>
<svg class="a" style="left:1446px;top:480px" width="20" height="18"><path d="M2,16 L8,16 L10,12 L18,2" stroke="#d0d0d0" stroke-width="1.6" fill="none"/><path d="M2,15 L8,15 L10,11" stroke="#999" stroke-width="2.5" fill="none"/></svg>
<div class="t" style="left:1476px;top:483px;font-size:9.5px;color:#cfcfcf;letter-spacing:.3px;transform:scaleY(.7)">Penseel</div>
<div class="a" style="left:1423px;top:506px;width:12px;height:12px;border:1px solid #333;border-right-color:#5a5a5a;border-bottom-color:#2a2a2a"></div>
<svg class="a" style="left:1446px;top:503px" width="20" height="18"><path d="M2,16 L8,16 L10,12 L18,2" stroke="#d0d0d0" stroke-width="1.6" fill="none"/><path d="M2,15 L8,15 L10,11" stroke="#999" stroke-width="2.5" fill="none"/></svg>
<div class="t" style="left:1476px;top:506px;font-size:9px;font-weight:bold;color:#e8e8e8">Penseel</div>
<div class="a" style="left:1423px;top:530px;width:12px;height:12px;border:1px solid #333;border-right-color:#5a5a5a;border-bottom-color:#2a2a2a"></div>
<svg class="a" style="left:1446px;top:526px" width="20" height="18"><path d="M2,16 L8,16 L10,12 L18,2" stroke="#d0d0d0" stroke-width="1.6" fill="none"/><path d="M2,15 L8,15 L10,11" stroke="#999" stroke-width="2.5" fill="none"/></svg>
<div class="t" style="left:1476px;top:530px;font-size:9.5px;color:#cfcfcf;letter-spacing:.3px;transform:scaleY(.7)">Penseel</div>
<div class="a" style="left:1629px;top:100px;width:16px;height:446px;background:#404040"></div>
<div class="a" style="left:1633px;top:109px;width:6px;height:2px;background:#ddd"></div>
<div class="a" style="left:1631px;top:168px;width:11px;height:362px;border-radius:4px;background:linear-gradient(90deg,#606060,#8a8a8a 50%,#666)"></div>
<div class="a" style="left:1633px;top:540px;width:6px;height:2px;background:#ddd"></div>
<div class="a" style="left:1417px;top:546px;width:228px;height:21px;background:#4b4b4b"></div>
<svg class="a" style="left:1540px;top:550px" width="90" height="16"><path d="M2,9 h8 M6,5 v8" stroke="#ccc" stroke-width="2"/><rect x="10" y="3" width="8" height="10" fill="#bbb"/><rect x="33" y="4" width="14" height="10" fill="none" stroke="#ccc" stroke-width="2"/><rect x="37" y="2" width="6" height="3" fill="#ccc"/><path d="M64,4 h10 M65,5 v10 h8 v-10 M67,6 v8 M69,6 v8 M71,6 v8" stroke="#bbb" stroke-width="1.2" fill="none"/></svg>
<div class="a" style="left:1417px;top:567px;width:228px;height:3px;background:#2b2b2b"></div>
<div class="a" style="left:1417px;top:570px;width:228px;height:17px;background:#3c3c3c"></div>
<div class="a" style="left:1419px;top:570px;width:151px;height:18px;background:#535353"></div>
<div class="t" style="left:1424px;top:573px;font-size:9.6px;font-weight:bold;color:#e6e6e6">Voorinstellingen gereedschap</div>
<svg class="a" style="left:1624px;top:574px" width="18" height="10"><path d="M0,2h6l-3,3z" fill="#ccc"/><rect x="7" y="0" width="9" height="9" fill="#c8c8c8"/></svg>
<div class="a" style="left:1417px;top:587px;width:228px;height:2px;background:#5a5a5a"></div>
<div class="a" style="left:1417px;top:589px;width:211px;height:95px;background:#535353"></div>
<div class="a" style="left:1628px;top:589px;width:17px;height:444px;background:#434343"></div>
<svg class="a" style="left:1421px;top:591px" width="20" height="18"><path d="M2,16 L8,16 L10,12 L18,2" stroke="#d0d0d0" stroke-width="1.6" fill="none"/><path d="M2,15 L8,15 L10,11" stroke="#999" stroke-width="2.5" fill="none"/></svg>
<div class="t" style="left:1447px;top:594px;font-size:9.5px;font-weight:bold;color:#e0e0e0">2D potlood</div>
<svg class="a" style="left:1421px;top:615px" width="20" height="18"><path d="M2,16 L8,16 L10,12 L18,2" stroke="#d0d0d0" stroke-width="1.6" fill="none"/><path d="M2,15 L8,15 L10,11" stroke="#999" stroke-width="2.5" fill="none"/></svg>
<div class="t" style="left:1447px;top:618px;font-size:9.5px;font-weight:bold;color:#e0e0e0">Airbrush, zacht rond 50% stroming</div>
<svg class="a" style="left:1421px;top:639px" width="20" height="18"><path d="M2,16 L8,16 L10,12 L18,2" stroke="#d0d0d0" stroke-width="1.6" fill="none"/><path d="M2,15 L8,15 L10,11" stroke="#999" stroke-width="2.5" fill="none"/></svg>
<div class="t" style="left:1447px;top:642px;font-size:9.5px;font-weight:bold;color:#e0e0e0">Niet foto blauw potlood</div>
<svg class="a" style="left:1421px;top:663px" width="20" height="18"><path d="M2,16 L8,16 L10,12 L18,2" stroke="#d0d0d0" stroke-width="1.6" fill="none"/><path d="M2,15 L8,15 L10,11" stroke="#999" stroke-width="2.5" fill="none"/></svg>
<div class="t" style="left:1447px;top:666px;font-size:9.5px;font-weight:bold;color:#e0e0e0">Penseel, ovaal, 45 pixels, Vermenigv...</div>
<div class="a" style="left:1417px;top:1033px;width:228px;height:15px;background:#505050"></div>
<div class="a" style="left:1425px;top:1036px;width:10px;height:10px;background:#2f2f2f;border:1px solid #777"></div>
<div class="t" style="left:1426px;top:1034px;font-size:9px;font-weight:bold;color:#eee">&#10003;</div>
<div class="t" style="left:1439px;top:1037px;font-size:9px;color:#ddd;transform:scaleY(.8)">Huidig gereedschap</div>
<div class="a" style="left:1575px;top:1037px;width:11px;height:11px;background:#c8c8c8"></div>
<div class="a" style="left:1604px;top:1037px;width:10px;height:11px;background:repeating-linear-gradient(90deg,#999 0 1px,transparent 1px 3px)"></div>
<div class="a" style="left:1645px;top:71px;width:3px;height:977px;background:#2a2a2a"></div>
<!-- right column -->
<svg width="0" height="0" style="position:absolute"><defs><linearGradient id="gr1"><stop offset="0" stop-color="#333"/><stop offset="1" stop-color="#ddd"/></linearGradient></defs></svg>
<div class="a" style="left:1648px;top:71px;width:272px;height:977px;background:#4a4a4a;"></div>
<div class="a" style="left:1648px;top:71px;width:272px;height:12px;background:#373737;"></div>
<div class="t" style="left:1909px;top:72px;font-size:8px;color:#ccc;letter-spacing:-1px">&#9656;&#9656;</div>
<div class="a" style="left:1648px;top:83px;width:272px;height:2px;background:#2b2b2b;"></div>
<div class="a" style="left:1648px;top:85px;width:272px;height:15px;background:#3c3c3c;"></div>
<div class="a" style="left:1650px;top:85px;width:83px;height:15px;background:#444;"></div>
<div class="a" style="left:1733px;top:85px;width:31px;height:16px;background:#535353;"></div>
<div class="a" style="left:1764px;top:85px;width:39px;height:15px;background:#444;"></div>
<div class="a" style="left:1803px;top:85px;width:49px;height:15px;background:#444;"></div>
<div class="t" style="left:1655px;top:87px;font-size:10.5px;font-weight:bold;color:#a8a8a8;">Eigenschappen</div>
<div class="t" style="left:1738px;top:87px;font-size:10.5px;font-weight:bold;color:#e8e8e8;">Info</div>
<div class="t" style="left:1771px;top:87px;font-size:10.5px;font-weight:bold;color:#a8a8a8;">Teken</div>
<div class="t" style="left:1815px;top:87px;font-size:10.5px;font-weight:bold;color:#a8a8a8;">Alinea</div>
<svg class="a" style="left:1902px;top:88px" width="18" height="10"><path d="M0,2h6l-3,3z" fill="#ccc"/><rect x="7" y="0" width="9" height="9" fill="#c8c8c8"/></svg>
<div class="a" style="left:1648px;top:100px;width:272px;height:227px;background:#535353;"></div>
<div class="a" style="left:1648px;top:100px;width:272px;height:2px;background:#5d5d5d;"></div>
<div class="a" style="left:1784px;top:102px;width:2px;height:102px;background:#464646;"></div>
<div class="a" style="left:1648px;top:167px;width:272px;height:2px;background:#444;"></div>
<div class="a" style="left:1648px;top:203px;width:272px;height:2px;background:#444;"></div>
<div class="a" style="left:1648px;top:233px;width:272px;height:2px;background:#444;"></div>
<svg class="a" style="left:1655px;top:118px" width="18" height="16"><path d="M1,15 L10,5" stroke="#ccc" stroke-width="2"/><path d="M9,6 l4,-4 l3,3 l-4,4z" fill="#ddd"/><rect x="12" y="10" width="5" height="2" fill="#ccc"/></svg>
<svg class="a" style="left:1791px;top:118px" width="18" height="16"><path d="M1,15 L10,5" stroke="#ccc" stroke-width="2"/><path d="M9,6 l4,-4 l3,3 l-4,4z" fill="#ddd"/><rect x="12" y="10" width="5" height="2" fill="#ccc"/></svg>
<div class="t" style="left:1683px;top:109px;font-size:9.5px;font-weight:bold;color:#e6e6e6;">R&nbsp;:</div>
<div class="t" style="left:1748px;top:109px;font-size:9.5px;font-weight:bold;color:#e6e6e6;">150</div>
<div class="t" style="left:1683px;top:120px;font-size:9.5px;font-weight:bold;color:#e6e6e6;">G&nbsp;:</div>
<div class="t" style="left:1748px;top:120px;font-size:9.5px;font-weight:bold;color:#e6e6e6;">144</div>
<div class="t" style="left:1683px;top:131px;font-size:9.5px;font-weight:bold;color:#e6e6e6;">B&nbsp;:</div>
<div class="t" style="left:1748px;top:131px;font-size:9.5px;font-weight:bold;color:#e6e6e6;">150</div>
<div class="t" style="left:1819px;top:109px;font-size:9.5px;font-weight:bold;color:#e6e6e6;">C&nbsp;:</div>
<div class="t" style="right:16px;top:109px;font-size:9.5px;font-weight:bold;color:#e6e6e6">30%</div>
<div class="t" style="left:1819px;top:120px;font-size:9.5px;font-weight:bold;color:#e6e6e6;">M&nbsp;:</div>
<div class="t" style="right:16px;top:120px;font-size:9.5px;font-weight:bold;color:#e6e6e6">41%</div>
<div class="t" style="left:1819px;top:131px;font-size:9.5px;font-weight:bold;color:#e6e6e6;">Y&nbsp;:</div>
<div class="t" style="right:16px;top:131px;font-size:9.5px;font-weight:bold;color:#e6e6e6">31%</div>
<div class="t" style="left:1819px;top:142px;font-size:9.5px;font-weight:bold;color:#e6e6e6;">K&nbsp;:</div>
<div class="t" style="right:16px;top:142px;font-size:9.5px;font-weight:bold;color:#e6e6e6">4%</div>
<div class="t" style="left:1673px;top:153px;font-size:10px;font-weight:bold;color:#e6e6e6;">8 bits</div>
<div class="t" style="left:1810px;top:153px;font-size:10px;font-weight:bold;color:#e6e6e6;">8 bits</div>
<svg class="a" style="left:1654px;top:177px" width="18" height="16"><path d="M0,7 h12 M7,1 v14" stroke="#ccc" stroke-width="1.5"/><rect x="12" y="11" width="4" height="2" fill="#ccc"/></svg>
<div class="t" style="left:1683px;top:176px;font-size:9.5px;font-weight:bold;color:#e6e6e6;">X&nbsp;:</div>
<div class="t" style="left:1683px;top:187px;font-size:9.5px;font-weight:bold;color:#e6e6e6;">Y&nbsp;:</div>
<div class="t" style="left:1744px;top:176px;font-size:9.5px;font-weight:bold;color:#e6e6e6;">7,30</div>
<div class="t" style="left:1744px;top:187px;font-size:9.5px;font-weight:bold;color:#e6e6e6;">1,18</div>
<svg class="a" style="left:1792px;top:178px" width="16" height="16"><rect x="2" y="2" width="11" height="11" fill="none" stroke="#bbb" stroke-width="1.3" stroke-dasharray="3,2"/></svg>
<div class="t" style="left:1819px;top:176px;font-size:9.5px;font-weight:bold;color:#e6e6e6;">B&nbsp;:</div>
<div class="t" style="left:1819px;top:187px;font-size:9.5px;font-weight:bold;color:#e6e6e6;">H&nbsp;:</div>
<div class="t" style="left:1659px;top:215px;font-size:9.5px;font-weight:bold;color:#e6e6e6;">Doc: 350,0 K/1,05 M</div>
<div class="t" style="left:1659px;top:243px;font-size:9.3px;font-weight:bold;color:#e6e6e6;">Klik en sleep om met de voorgrondkleur te tekenen.</div>
<div class="t" style="left:1659px;top:255px;font-size:9.3px;font-weight:bold;color:#e6e6e6;">Gebruik Shift, Alt en Ctrl voor extra opties.</div>
<div class="a" style="left:1648px;top:327px;width:272px;height:3px;background:#2b2b2b;"></div>
<div class="a" style="left:1648px;top:330px;width:272px;height:15px;background:#3c3c3c;"></div>
<div class="a" style="left:1650px;top:330px;width:38px;height:16px;background:#535353;"></div>
<div class="a" style="left:1688px;top:330px;width:43px;height:15px;background:#444;"></div>
<div class="t" style="left:1655px;top:332px;font-size:10.5px;font-weight:bold;color:#e8e8e8;">Kleur</div>
<div class="t" style="left:1695px;top:332px;font-size:10.5px;font-weight:bold;color:#a8a8a8;">Stalen</div>
<svg class="a" style="left:1902px;top:333px" width="18" height="10"><path d="M0,2h6l-3,3z" fill="#ccc"/><rect x="7" y="0" width="9" height="9" fill="#c8c8c8"/></svg>
<div class="a" style="left:1648px;top:345px;width:272px;height:103px;background:#535353;"></div>
<div class="a" style="left:1648px;top:345px;width:272px;height:2px;background:#5d5d5d;"></div>
<div class="a" style="left:1663px;top:364px;width:20px;height:20px;background:#fff;border:1px solid #444"></div>
<div class="a" style="left:1653px;top:354px;width:20px;height:20px;background:#6a9a6f;border:2px solid #eee;box-shadow:0 0 0 1px #333"></div>
<div class="t" style="left:1692px;top:357px;font-size:9px;font-weight:bold;color:#e0e0e0;">R</div>
<div class="a" style="left:1706px;top:357px;width:85px;height:4px;background:linear-gradient(90deg,#009665,#ff9665);"></div>
<svg class="a" style="left:1735px;top:361px" width="10" height="8"><path d="M0,7 L5,1 L10,7z" fill="#c4c4c4"/></svg>
<div class="a" style="left:1797px;top:353px;width:46px;height:17px;background:#383838;border:1px solid #4a4a4a"></div>
<div class="t" style="left:1804px;top:356px;font-size:10px;font-weight:bold;color:#e6e6e6;">102</div>
<div class="t" style="left:1692px;top:381px;font-size:9px;font-weight:bold;color:#e0e0e0;">G</div>
<div class="a" style="left:1706px;top:381px;width:85px;height:4px;background:linear-gradient(90deg,#b400b4,#66ff65);"></div>
<svg class="a" style="left:1751px;top:385px" width="10" height="8"><path d="M0,7 L5,1 L10,7z" fill="#c4c4c4"/></svg>
<div class="a" style="left:1797px;top:377px;width:46px;height:17px;background:#383838;border:1px solid #4a4a4a"></div>
<div class="t" style="left:1804px;top:380px;font-size:10px;font-weight:bold;color:#e6e6e6;">150</div>
<div class="t" style="left:1692px;top:405px;font-size:9px;font-weight:bold;color:#e0e0e0;">B</div>
<div class="a" style="left:1706px;top:405px;width:85px;height:4px;background:linear-gradient(90deg,#669600,#6696ff);"></div>
<svg class="a" style="left:1734px;top:409px" width="10" height="8"><path d="M0,7 L5,1 L10,7z" fill="#c4c4c4"/></svg>
<div class="a" style="left:1797px;top:401px;width:46px;height:17px;background:#383838;border:1px solid #4a4a4a"></div>
<div class="t" style="left:1804px;top:404px;font-size:10px;font-weight:bold;color:#e6e6e6;">101</div>
<div class="a" style="left:1653px;top:428px;width:192px;height:16px;background:linear-gradient(90deg,#e02020,#f0a020 14%,#f0f020 24%,#20a040 38%,#10a0b0 48%,#2060e0 58%,#6020b0 68%,#d020a0 80%,#f02040 92%,#e83020);"></div>
<div class="a" style="left:1845px;top:428px;width:8px;height:8px;background:#fff;"></div>
<div class="a" style="left:1845px;top:436px;width:8px;height:8px;background:#000;"></div>
<div class="a" style="left:1653px;top:436px;width:192px;height:8px;background:linear-gradient(rgba(0,0,0,0),rgba(0,0,0,.35));"></div>
<div class="a" style="left:1648px;top:448px;width:272px;height:3px;background:#2b2b2b;"></div>
<div class="a" style="left:1648px;top:451px;width:272px;height:15px;background:#3c3c3c;"></div>
<div class="a" style="left:1650px;top:451px;width:75px;height:16px;background:#535353;"></div>
<div class="a" style="left:1725px;top:451px;width:45px;height:15px;background:#444;"></div>
<div class="t" style="left:1655px;top:454px;font-size:10px;font-weight:bold;color:#e8e8e8;">Aanpassingen</div>
<div class="t" style="left:1732px;top:453px;font-size:10.5px;font-weight:bold;color:#a8a8a8;">Stijlen</div>
<svg class="a" style="left:1902px;top:454px" width="18" height="10"><path d="M0,2h6l-3,3z" fill="#ccc"/><rect x="7" y="0" width="9" height="9" fill="#c8c8c8"/></svg>
<div class="a" style="left:1648px;top:466px;width:272px;height:100px;background:#535353;"></div>
<div class="a" style="left:1648px;top:466px;width:272px;height:2px;background:#5d5d5d;"></div>
<div class="t" style="left:1657px;top:472px;font-size:10.2px;font-weight:bold;color:#eeeeee;">Een aanpassing toevoegen</div>
<svg class="a" style="left:1693px;top:490px" width="18" height="16"><circle cx="9" cy="8" r="4" fill="none" stroke="#c8c8c8" stroke-width="1.5"/><path d="M9,1v2M9,13v2M2,8h2M14,8h2M4,3l1.5,1.5M12.5,11.5L14,13M4,13l1.5,-1.5M12.5,4.5L14,3" stroke="#c8c8c8" stroke-width="1.2"/></svg>
<svg class="a" style="left:1718px;top:490px" width="18" height="16"><path d="M1,14 L1,10 L3,6 L5,9 L7,4 L9,8 L11,3 L13,7 L15,5 L17,9 L17,14z" fill="#c8c8c8"/><rect x="1" y="13" width="16" height="2" fill="#c8c8c8"/></svg>
<svg class="a" style="left:1742px;top:490px" width="18" height="16"><rect x="1" y="1" width="16" height="14" fill="none" stroke="#c8c8c8" stroke-width="1.2"/><path d="M1,5h16M1,10h16M6,1v14M12,1v14" stroke="#8a8a8a" stroke-width="1"/><path d="M2,14 C8,12 10,4 16,2" stroke="#c8c8c8" stroke-width="1.6" fill="none"/></svg>
<svg class="a" style="left:1766px;top:490px" width="18" height="16"><rect x="1" y="1" width="16" height="14" fill="none" stroke="#c8c8c8" stroke-width="1.5"/><path d="M3,6h5M5.5,3.5v5M10,11h5M2,14 L16,2" stroke="#c8c8c8" stroke-width="1.3"/></svg>
<svg class="a" style="left:1790px;top:490px" width="18" height="16"><path d="M1,2 L17,2 L9,15z" fill="none" stroke="#c8c8c8" stroke-width="1.5"/><path d="M4,4 L14,4 L9,12z" fill="#c8c8c8" opacity=".5"/></svg>
<svg class="a" style="left:1681px;top:517px" width="18" height="16"><rect x="1" y="2" width="16" height="12" fill="#c8c8c8" opacity=".35"/><path d="M2,4v9M5,6v7M8,3v10M11,5v8M14,4v9" stroke="#c8c8c8" stroke-width="2"/></svg>
<svg class="a" style="left:1705px;top:517px" width="18" height="16"><path d="M9,2v12M3,4h12M3,4 L1,10h4z M15,4 L13,10h4z M5,14h8" stroke="#c8c8c8" stroke-width="1.3" fill="none"/><rect x="7" y="1" width="4" height="3" fill="#c8c8c8"/></svg>
<svg class="a" style="left:1730px;top:517px" width="18" height="16"><rect x="1" y="1" width="16" height="14" fill="none" stroke="#c8c8c8" stroke-width="1.3"/><rect x="9" y="1" width="8" height="14" fill="#c8c8c8"/></svg>
<svg class="a" style="left:1754px;top:517px" width="18" height="16"><rect x="1" y="4" width="12" height="10" fill="none" stroke="#c8c8c8" stroke-width="1.5"/><circle cx="11" cy="11" r="5" fill="#c8c8c8" opacity=".8"/></svg>
<svg class="a" style="left:1778px;top:517px" width="18" height="16"><circle cx="9" cy="6" r="4" fill="#c8c8c8" opacity=".7"/><circle cx="6" cy="11" r="4" fill="#c8c8c8" opacity=".7"/><circle cx="12" cy="11" r="4" fill="#aaa" opacity=".7"/></svg>
<svg class="a" style="left:1802px;top:517px" width="18" height="16"><rect x="1" y="1" width="16" height="14" fill="none" stroke="#c8c8c8" stroke-width="1.3"/><path d="M5,1v14M9,1v14M13,1v14" stroke="#c8c8c8" stroke-width="1.3"/></svg>
<svg class="a" style="left:1694px;top:544px" width="18" height="16"><rect x="1" y="1" width="16" height="14" fill="none" stroke="#c8c8c8" stroke-width="1.5"/><path d="M3,13 C5,5 9,5 11,9 L14,3" stroke="#c8c8c8" stroke-width="1.5" fill="none"/></svg>
<svg class="a" style="left:1718px;top:544px" width="18" height="16"><rect x="1" y="1" width="16" height="14" fill="none" stroke="#c8c8c8" stroke-width="1.3"/><path d="M2,14 L16,2 L16,14z" fill="#c8c8c8" opacity=".7"/></svg>
<svg class="a" style="left:1742px;top:544px" width="18" height="16"><rect x="1" y="1" width="16" height="14" fill="none" stroke="#c8c8c8" stroke-width="1.5"/><path d="M2,12 L7,12 L7,7 L11,7 L11,3 L16,3" stroke="#c8c8c8" stroke-width="2" fill="none"/></svg>
<svg class="a" style="left:1766px;top:544px" width="18" height="16"><rect x="1" y="1" width="16" height="14" fill="none" stroke="#c8c8c8" stroke-width="1.5"/><path d="M2,2 L16,14 M16,2 L2,14" stroke="#c8c8c8" stroke-width="1.5"/></svg>
<svg class="a" style="left:1790px;top:544px" width="18" height="16"><rect x="1" y="1" width="16" height="14" fill="none" stroke="#c8c8c8" stroke-width="1.3"/><rect x="2" y="2" width="14" height="12" fill="url(#gr1)"/></svg>
<div class="a" style="left:1648px;top:566px;width:272px;height:6px;background:#2b2b2b;"></div>
<div class="a" style="left:1648px;top:572px;width:272px;height:16px;background:#3c3c3c;"></div>
<div class="a" style="left:1650px;top:572px;width:40px;height:17px;background:#535353;"></div>
<div class="a" style="left:1690px;top:572px;width:50px;height:16px;background:#444;"></div>
<div class="a" style="left:1740px;top:572px;width:45px;height:16px;background:#444;"></div>
<div class="t" style="left:1655px;top:575px;font-size:10px;font-weight:bold;color:#e0e0e0;transform:scaleY(.75)">Lagen</div>
<div class="t" style="left:1697px;top:575px;font-size:10px;font-weight:bold;color:#a0a0a0;transform:scaleY(.75)">Kanalen</div>
<div class="t" style="left:1748px;top:575px;font-size:10px;font-weight:bold;color:#a0a0a0;transform:scaleY(.75)">Paden</div>
<svg class="a" style="left:1904px;top:576px" width="16" height="10"><rect x="0" y="4" width="5" height="2" fill="#ccc"/><rect x="7" y="0" width="9" height="9" fill="#181818"/></svg>
<div class="a" style="left:1648px;top:589px;width:260px;height:444px;background:#4a4a4a;"></div>
<div class="a" style="left:1648px;top:588px;width:272px;height:2px;background:#5a5a5a;"></div>
<div class="a" style="left:1653px;top:593px;width:68px;height:19px;background:linear-gradient(#606060,#555);border:1px solid #3a3a3a;border-radius:2px"></div>
<div class="t" style="left:1660px;top:597px;font-size:10px;font-weight:bold;color:#ddd;">&#8981; Soort</div>
<svg class="a" style="left:1709px;top:597px" width="7" height="12"><path d="M0.5,5 L3.5,1 L6.5,5z M0.5,7 L3.5,11 L6.5,7z" fill="#ddd"/></svg>
<svg class="a" style="left:1759px;top:595px" width="16" height="16"><rect x="1" y="2" width="14" height="11" fill="none" stroke="#c0c0c0" stroke-width="1.5"/><path d="M3,10 l3,-3 2,2 3,-3 2,2" stroke="#c0c0c0" stroke-width="1.2" fill="none"/></svg>
<svg class="a" style="left:1783px;top:595px" width="16" height="16"><circle cx="8" cy="8" r="6" fill="#c0c0c0"/><path d="M4,12 L12,4" stroke="#555" stroke-width="2"/></svg>
<svg class="a" style="left:1808px;top:595px" width="16" height="16"><path d="M2,2 h12 M8,2 v12 M5,14 h6 M2,2 v3 M14,2 v3" stroke="#c0c0c0" stroke-width="2" fill="none"/></svg>
<svg class="a" style="left:1832px;top:595px" width="16" height="16"><rect x="2" y="3" width="12" height="10" fill="none" stroke="#c0c0c0" stroke-width="1.5"/><path d="M0,3h3M13,3h3M0,13h3M13,13h3" stroke="#c0c0c0" stroke-width="1.5"/></svg>
<svg class="a" style="left:1856px;top:595px" width="16" height="16"><rect x="2" y="8" width="6" height="7" fill="#c0c0c0"/><path d="M8,8 v-6 h5 v4" stroke="#c0c0c0" stroke-width="1.5" fill="none"/></svg>
<div class="a" style="left:1908px;top:592px;width:11px;height:20px;background:linear-gradient(#888 50%,#3a3a3a 50%);border:1px solid #333"></div>
<div class="a" style="left:1648px;top:615px;width:272px;height:2px;background:#3f3f3f;"></div>
<div class="a" style="left:1653px;top:621px;width:159px;height:19px;background:linear-gradient(#626262,#565656);border:1px solid #3a3a3a;border-radius:2px"></div>
<div class="t" style="left:1660px;top:625px;font-size:10px;font-weight:bold;color:#ddd;transform:scaleY(.8)">Normaal</div>
<svg class="a" style="left:1801px;top:625px" width="7" height="12"><path d="M0.5,5 L3.5,1 L6.5,5z M0.5,7 L3.5,11 L6.5,7z" fill="#ddd"/></svg>
<div class="t" style="left:1820px;top:624px;font-size:10px;font-weight:bold;color:#e0e0e0;">Dekking:</div>
<div class="a" style="left:1865px;top:621px;width:35px;height:19px;background:#2f2f2f;"></div>
<div class="a" style="left:1900px;top:621px;width:18px;height:19px;background:#5a5a5a;"></div>
<div class="t" style="left:1870px;top:626px;font-size:9px;font-weight:bold;color:#ddd;transform:scaleY(.8)">100%</div>
<svg class="a" style="left:1905px;top:628px" width="8" height="6"><path d="M0,0h7l-3.5,4z" fill="#ddd"/></svg>
<div class="a" style="left:1648px;top:643px;width:272px;height:2px;background:#3f3f3f;"></div>
<div class="t" style="left:1655px;top:654px;font-size:9px;font-weight:bold;color:#ddd;transform:scaleY(.75)">Verenigen:</div>
<div class="t" style="left:1709px;top:651px;font-size:10px;color:#bbb;">&#10022;&nbsp;&nbsp;&#10059;&nbsp;&nbsp;/&#10059;</div>
<div class="a" style="left:1812px;top:653px;width:11px;height:11px;background:#3a3a3a;border:1px solid #777"></div>
<div class="t" style="left:1812px;top:650px;font-size:10px;font-weight:bold;color:#eee;">&#10003;</div>
<div class="t" style="left:1828px;top:654px;font-size:9px;font-weight:bold;color:#ddd;transform:scaleY(.7)">Frame 1 doorgeven</div>
<div class="a" style="left:1648px;top:671px;width:272px;height:2px;background:#3f3f3f;"></div>
<div class="t" style="left:1655px;top:682px;font-size:10px;font-weight:bold;color:#e0e0e0;">Vergr.:</div>
<div class="a" style="left:1694px;top:681px;width:11px;height:11px;background:repeating-conic-gradient(#ccc 0 25%,#555 0 50%) 0 0/5px 5px;"></div>
<svg class="a" style="left:1713px;top:678px" width="60" height="18"><path d="M2,16 L14,3" stroke="#ccc" stroke-width="2"/><path d="M31,2 v14 M24,9 h14" stroke="#ccc" stroke-width="2"/><rect x="48" y="8" width="10" height="8" fill="#bbb"/><path d="M50,8 v-3 a3,3 0 0 1 6,0 v3" stroke="#bbb" stroke-width="1.5" fill="none"/></svg>
<div class="t" style="left:1842px;top:682px;font-size:10px;font-weight:bold;color:#e0e0e0;">Vul:</div>
<div class="a" style="left:1865px;top:676px;width:35px;height:20px;background:#2f2f2f;"></div>
<div class="a" style="left:1900px;top:676px;width:18px;height:20px;background:#5a5a5a;"></div>
<div class="t" style="left:1870px;top:682px;font-size:9px;font-weight:bold;color:#ddd;transform:scaleY(.8)">100%</div>
<svg class="a" style="left:1905px;top:684px" width="8" height="6"><path d="M0,0h7l-3.5,4z" fill="#ddd"/></svg>
<div class="a" style="left:1648px;top:699px;width:272px;height:2px;background:#3b3b3b;"></div>
<div class="a" style="left:1908px;top:701px;width:12px;height:332px;background:#434343;"></div>

<div class="a" style="left:1648px;top:701px;width:260px;height:39px;background:#535353;"></div>
<div class="a" style="left:1648px;top:739px;width:260px;height:1px;background:#3e3e3e;"></div>
<svg class="a" style="left:1656px;top:716px" width="14" height="10"><path d="M1,5 Q7,-1 13,5 Q7,11 1,5z" fill="none" stroke="#ccc" stroke-width="1.5"/><circle cx="7" cy="5" r="2" fill="#ccc"/></svg>
<div class="a" style="left:1683px;top:706px;width:31px;height:31px;background:repeating-conic-gradient(#fff 0 25%,#d6d6d6 0 50%) 0 0/8px 8px;border:1px solid #111"></div>
<div class="t" style="left:1724px;top:715px;font-size:10px;font-weight:bold;color:#eaeaea;">Laag 3</div>
<div class="a" style="left:1648px;top:740px;width:260px;height:39px;background:#535353;"></div>
<div class="a" style="left:1648px;top:778px;width:260px;height:1px;background:#3e3e3e;"></div>
<svg class="a" style="left:1656px;top:755px" width="14" height="10"><path d="M1,5 Q7,-1 13,5 Q7,11 1,5z" fill="none" stroke="#ccc" stroke-width="1.5"/><circle cx="7" cy="5" r="2" fill="#ccc"/></svg>
<div class="a" style="left:1683px;top:745px;width:31px;height:31px;background:repeating-conic-gradient(#fff 0 25%,#d6d6d6 0 50%) 0 0/8px 8px;border:1px solid #111"></div>
<svg class="a" style="left:1684px;top:745px" width="31" height="31" viewBox="120 2 1230 1256" preserveAspectRatio="none"><use href="#frog"/><path d="M146,905 C150,1010 260,1130 430,1160 C620,1190 820,1160 920,1100 C975,1060 1000,990 1005,905 Z" fill="#bd8c86"/><path d="M146,910 C150,1010 260,1130 430,1160 C620,1190 820,1160 920,1100 C975,1060 1000,990 1005,910" fill="none" stroke="#000" stroke-width="14"/><path d="M1000,905 C990,1010 940,1090 880,1130" fill="none" stroke="#6a9a6f" stroke-width="40"/><path d="M366,910 L634,910 C620,1000 600,1080 560,1120 C480,1120 420,1060 366,910Z" fill="#c8aba7"/><path d="M146,905 C148,960 170,1000 200,1040" fill="none" stroke="#6a9a6f" stroke-width="30"/></svg>
<div class="t" style="left:1724px;top:754px;font-size:9.5px;font-weight:bold;color:#dde;transform:scaleY(.7);opacity:.85">Laag 2</div>
<div class="a" style="left:1648px;top:779px;width:260px;height:39px;background:#535353;"></div>
<div class="a" style="left:1680px;top:779px;width:228px;height:39px;background:#4f5e72;"></div>
<div class="a" style="left:1648px;top:817px;width:260px;height:1px;background:#3e3e3e;"></div>
<svg class="a" style="left:1656px;top:794px" width="14" height="10"><path d="M1,5 Q7,-1 13,5 Q7,11 1,5z" fill="none" stroke="#ccc" stroke-width="1.5"/><circle cx="7" cy="5" r="2" fill="#ccc"/></svg>
<div class="a" style="left:1683px;top:784px;width:31px;height:31px;background:repeating-conic-gradient(#fff 0 25%,#d6d6d6 0 50%) 0 0/8px 8px;border:1px solid #111"></div>
<div class="a" style="left:1680px;top:781px;width:2px;height:35px;background:#e0e6ee;"></div>
<div class="a" style="left:1716px;top:781px;width:2px;height:35px;background:#e0e6ee;"></div>
<div class="t" style="left:1724px;top:793px;font-size:10px;font-weight:bold;color:#eaeaea;">Layer under main. used to colour e...</div>
<div class="a" style="left:1648px;top:818px;width:260px;height:39px;background:#535353;"></div>
<div class="a" style="left:1648px;top:856px;width:260px;height:1px;background:#3e3e3e;"></div>
<div class="a" style="left:1656px;top:831px;width:12px;height:12px;background:transparent;border:1px solid #333;border-right-color:#5a5a5a;border-bottom-color:#5a5a5a"></div>
<div class="a" style="left:1683px;top:823px;width:31px;height:31px;background:linear-gradient(135deg,#fff 60%,#ccc);border:1px solid #111"></div>
<svg class="a" style="left:1684px;top:823px" width="31" height="31" viewBox="120 2 1230 1256" preserveAspectRatio="none"><use href="#frog"/><path d="M146,905 C150,1010 260,1130 430,1160 C620,1190 820,1160 920,1100 C975,1060 1000,990 1005,905 Z" fill="#bd8c86"/><path d="M146,910 C150,1010 260,1130 430,1160 C620,1190 820,1160 920,1100 C975,1060 1000,990 1005,910" fill="none" stroke="#000" stroke-width="14"/><path d="M1000,905 C990,1010 940,1090 880,1130" fill="none" stroke="#6a9a6f" stroke-width="40"/><path d="M366,910 L634,910 C620,1000 600,1080 560,1120 C480,1120 420,1060 366,910Z" fill="#c8aba7"/><path d="M146,905 C148,960 170,1000 200,1040" fill="none" stroke="#6a9a6f" stroke-width="30"/></svg>
<div class="t" style="left:1724px;top:832px;font-size:9.5px;font-weight:bold;color:#dde;transform:scaleY(.7);opacity:.85">Laag 1</div>
<div class="a" style="left:1648px;top:857px;width:260px;height:39px;background:#535353;"></div>
<div class="a" style="left:1648px;top:895px;width:260px;height:1px;background:#3e3e3e;"></div>
<svg class="a" style="left:1656px;top:872px" width="14" height="10"><path d="M1,5 Q7,-1 13,5 Q7,11 1,5z" fill="none" stroke="#ccc" stroke-width="1.5"/><circle cx="7" cy="5" r="2" fill="#ccc"/></svg>
<div class="a" style="left:1683px;top:862px;width:31px;height:31px;background:#fff;border:1px solid #111"></div>
<div class="t" style="left:1724px;top:871px;font-size:10.5px;font-weight:bold;color:#e6e6e6;font-style:italic">Achtergrond</div>
<svg class="a" style="left:1879px;top:869px" width="12" height="14"><rect x="1" y="6" width="10" height="7" fill="#bbb"/><path d="M3,6 v-2 a3,3 0 0 1 6,0 v2" stroke="#bbb" stroke-width="1.5" fill="none"/></svg>
<div class="a" style="left:1678px;top:701px;width:1px;height:196px;background:#3a3a3a;"></div>
<div class="a" style="left:1648px;top:1033px;width:272px;height:15px;background:#4c4c4c;"></div>
<div class="a" style="left:1908px;top:1033px;width:12px;height:15px;background:#4c4c4c;"></div>
<svg class="a" style="left:1715px;top:1035px" width="190" height="13"><path d="M4,7 q3,-4 6,0 q3,4 6,0" stroke="#999" stroke-width="1.5" fill="none"/><text x="34" y="11" font-size="11" font-style="italic" fill="#ccc" font-family="Liberation Serif">fx</text><rect x="60" y="2" width="12" height="11" fill="#c8c8c8"/><circle cx="66" cy="8" r="3" fill="#555"/><circle cx="93" cy="8" r="5" fill="#bbb"/><path d="M114,4 h5 l1,2 h6 v7 h-12z" fill="#c8c8c8"/><rect x="142" y="3" width="10" height="10" fill="#c8c8c8"/><path d="M168,3 h12 M170,4 v9 M173,4 v9 M176,4 v9 M179,4 v9" stroke="#aaa" stroke-width="1.2"/></svg>

<!-- canvas drawing -->
<svg class="a" style="left:0;top:0" width="1920" height="1080" viewBox="0 0 1920 1080">
<defs><clipPath id="cv"><rect x="123" y="107" width="1055" height="810"/></clipPath></defs>
<rect x="123" y="107" width="1055" height="810" fill="#fff"/>
<g clip-path="url(#cv)" stroke-linejoin="round" stroke-linecap="round"><g id="frog">
<path fill="#bd8c86" d="M150.0,990.0 C20.0,980.8 168.3,947.8 170.0,935.0 C171.7,922.2 163.7,920.5 160.0,913.0 C156.3,905.5 151.0,899.3 148.0,890.0 C145.0,880.7 142.8,869.5 142.0,857.0 C141.2,844.5 141.2,827.5 143.0,815.0 C144.8,802.5 148.5,790.8 153.0,782.0 C157.5,773.2 163.3,769.0 170.0,762.0 C176.7,755.0 185.5,747.5 193.0,740.0 C200.5,732.5 206.3,725.3 215.0,717.0 C223.7,708.7 234.2,697.8 245.0,690.0 C255.8,682.2 268.3,677.5 280.0,670.0 C291.7,662.5 305.0,652.5 315.0,645.0 C325.0,637.5 333.3,631.7 340.0,625.0 C346.7,618.3 350.8,611.3 355.0,605.0 C359.2,598.7 361.7,594.2 365.0,587.0 C368.3,579.8 371.7,571.5 375.0,562.0 C378.3,552.5 382.8,540.3 385.0,530.0 C387.2,519.7 387.0,510.0 388.0,500.0 C389.0,490.0 389.5,481.2 391.0,470.0 C392.5,458.8 394.3,446.8 397.0,433.0 C399.7,419.2 402.7,402.5 407.0,387.0 C411.3,371.5 416.3,355.0 423.0,340.0 C429.7,325.0 438.7,309.8 447.0,297.0 C455.3,284.2 463.3,272.5 473.0,263.0 C482.7,253.5 497.7,244.3 505.0,240.0 C512.3,235.7 512.8,235.7 517.0,237.0 C521.2,238.3 522.8,248.2 530.0,248.0 C537.2,247.8 548.3,240.3 560.0,236.0 C571.7,231.7 585.0,225.7 600.0,222.0 C615.0,218.3 639.7,216.8 650.0,214.0 C660.3,211.2 650.3,208.0 662.0,205.0 C673.7,202.0 698.7,197.3 720.0,196.0 C741.3,194.7 776.7,195.5 790.0,197.0 C803.3,198.5 786.7,203.7 800.0,205.0 C813.3,206.3 856.7,206.2 870.0,205.0 C883.3,203.8 873.7,199.2 880.0,198.0 C886.3,196.8 895.0,192.7 908.0,198.0 C921.0,203.3 946.0,222.8 958.0,230.0 C970.0,237.2 973.8,236.8 980.0,241.0 C986.2,245.2 989.2,248.2 995.0,255.0 C1000.8,261.8 1010.0,273.7 1015.0,282.0 C1020.0,290.3 1021.0,294.8 1025.0,305.0 C1029.0,315.2 1035.5,331.8 1039.0,343.0 C1042.5,354.2 1044.0,361.2 1046.0,372.0 C1048.0,382.8 1049.7,396.0 1051.0,408.0 C1052.3,420.0 1053.5,432.0 1054.0,444.0 C1054.5,456.0 1054.8,469.5 1054.0,480.0 C1053.2,490.5 1051.0,500.2 1049.0,507.0 C1047.0,513.8 1043.7,512.2 1042.0,521.0 C1040.3,529.8 1041.5,547.3 1039.0,560.0 C1036.5,572.7 1030.2,583.7 1027.0,597.0 C1023.8,610.3 1022.8,624.5 1020.0,640.0 C1017.2,655.5 1013.8,673.3 1010.0,690.0 C1006.2,706.7 998.5,723.3 997.0,740.0 C995.5,756.7 1003.0,778.0 1001.0,790.0 C999.0,802.0 990.7,804.2 985.0,812.0 C979.3,819.8 970.8,827.3 967.0,837.0 C963.2,846.7 963.7,853.7 962.0,870.0 C960.3,886.3 959.0,915.0 957.0,935.0 C955.0,955.0 1084.5,980.8 950.0,990.0 C815.5,999.2 280.0,999.2 150.0,990.0Z"/>
<path fill="#6a9a6f" d="M982.0,162.0 C985.2,158.5 999.0,152.8 1007.0,150.0 C1015.0,147.2 1023.2,145.5 1030.0,145.0 C1036.8,144.5 1041.7,145.0 1048.0,147.0 C1054.3,149.0 1062.2,153.2 1068.0,157.0 C1073.8,160.8 1079.0,164.5 1083.0,170.0 C1087.0,175.5 1090.3,182.5 1092.0,190.0 C1093.7,197.5 1093.0,206.7 1093.0,215.0 C1093.0,223.3 1093.7,231.7 1092.0,240.0 C1090.3,248.3 1085.8,258.0 1083.0,265.0 C1080.2,272.0 1077.5,276.2 1075.0,282.0 C1072.5,287.8 1070.3,290.2 1068.0,300.0 C1065.7,309.8 1061.8,330.5 1061.0,341.0 C1060.2,351.5 1061.5,355.8 1063.0,363.0 C1064.5,370.2 1068.2,374.5 1070.0,384.0 C1071.8,393.5 1073.2,408.0 1074.0,420.0 C1074.8,432.0 1075.0,448.0 1075.0,456.0 C1075.0,464.0 1074.8,461.8 1074.0,468.0 C1073.2,474.2 1068.7,484.2 1070.0,493.0 C1071.3,501.8 1078.3,509.8 1082.0,521.0 C1085.7,532.2 1089.7,548.5 1092.0,560.0 C1094.3,571.5 1095.3,580.0 1096.0,590.0 C1096.7,600.0 1096.3,608.5 1096.0,620.0 C1095.7,631.5 1095.0,642.8 1094.0,659.0 C1093.0,675.2 1092.3,697.8 1090.0,717.0 C1087.7,736.2 1084.0,756.8 1080.0,774.0 C1076.0,791.2 1072.0,804.8 1066.0,820.0 C1060.0,835.2 1051.3,853.0 1044.0,865.0 C1036.7,877.0 1029.3,884.3 1022.0,892.0 C1014.7,899.7 1006.2,903.8 1000.0,911.0 C993.8,918.2 988.3,921.8 985.0,935.0 C981.7,948.2 985.8,980.8 980.0,990.0 C974.2,999.2 953.8,999.2 950.0,990.0 C946.2,980.8 955.0,955.0 957.0,935.0 C959.0,915.0 960.3,886.3 962.0,870.0 C963.7,853.7 963.2,846.7 967.0,837.0 C970.8,827.3 979.3,819.8 985.0,812.0 C990.7,804.2 999.0,802.0 1001.0,790.0 C1003.0,778.0 995.5,756.7 997.0,740.0 C998.5,723.3 1006.2,706.7 1010.0,690.0 C1013.8,673.3 1017.2,655.5 1020.0,640.0 C1022.8,624.5 1023.8,610.3 1027.0,597.0 C1030.2,583.7 1036.5,572.7 1039.0,560.0 C1041.5,547.3 1040.3,529.8 1042.0,521.0 C1043.7,512.2 1047.0,513.8 1049.0,507.0 C1051.0,500.2 1053.2,490.5 1054.0,480.0 C1054.8,469.5 1054.5,456.0 1054.0,444.0 C1053.5,432.0 1052.3,420.0 1051.0,408.0 C1049.7,396.0 1048.0,382.8 1046.0,372.0 C1044.0,361.2 1042.5,354.2 1039.0,343.0 C1035.5,331.8 1029.0,315.2 1025.0,305.0 C1021.0,294.8 1020.0,290.3 1015.0,282.0 C1010.0,273.7 1000.8,261.8 995.0,255.0 C989.2,248.2 979.8,245.8 980.0,241.0 C980.2,236.2 991.7,229.2 996.0,226.0 C1000.3,222.8 1003.7,224.7 1006.0,222.0 C1008.3,219.3 1010.5,215.3 1010.0,210.0 C1009.5,204.7 1006.7,196.5 1003.0,190.0 C999.3,183.5 991.5,175.7 988.0,171.0 C984.5,166.3 978.8,165.5 982.0,162.0Z"/>
<path fill="#6a9a6f" d="M880.0,990.0 C870.5,980.8 888.8,951.7 893.0,935.0 C897.2,918.3 899.7,901.7 905.0,890.0 C910.3,878.3 914.7,873.8 925.0,865.0 C935.3,856.2 960.8,836.2 967.0,837.0 C973.2,837.8 963.7,853.7 962.0,870.0 C960.3,886.3 959.0,915.0 957.0,935.0 C955.0,955.0 962.8,980.8 950.0,990.0 C937.2,999.2 889.5,999.2 880.0,990.0Z"/>
<path fill="#6a9a6f" d="M170.0,762.0 C167.5,757.8 157.5,773.2 153.0,782.0 C148.5,790.8 144.8,802.5 143.0,815.0 C141.2,827.5 141.2,844.5 142.0,857.0 C142.8,869.5 145.0,880.7 148.0,890.0 C151.0,899.3 156.3,905.5 160.0,913.0 C163.7,920.5 168.3,922.2 170.0,935.0 C171.7,947.8 160.0,980.8 170.0,990.0 C180.0,999.2 220.8,999.2 230.0,990.0 C239.2,980.8 227.8,946.7 225.0,935.0 C222.2,923.3 218.0,926.2 213.0,920.0 C208.0,913.8 200.8,905.8 195.0,898.0 C189.2,890.2 182.5,881.3 178.0,873.0 C173.5,864.7 169.7,859.0 168.0,848.0 C166.3,837.0 167.7,821.3 168.0,807.0 C168.3,792.7 172.5,766.2 170.0,762.0Z"/>
<path fill="#6a9a6f" d="M647.0,151.0 C651.2,149.2 664.2,142.5 674.0,148.0 C683.8,153.5 705.3,176.8 706.0,184.0 C706.7,191.2 685.0,192.8 678.0,191.0 C671.0,189.2 668.8,178.3 664.0,173.0 C659.2,167.7 651.8,162.7 649.0,159.0 C646.2,155.3 642.8,152.8 647.0,151.0Z"/>
<path fill="#000" d="M605,171 L624,159 L633,171 L617,179Z"/>
<path fill="#c8aba7" d="M350.0,990.0 C305.0,980.8 348.3,955.8 360.0,935.0 C371.7,914.2 404.0,882.8 420.0,865.0 C436.0,847.2 440.2,843.8 456.0,828.0 C471.8,812.2 500.2,783.8 515.0,770.0 C529.8,756.2 530.8,754.2 545.0,745.0 C559.2,735.8 585.8,723.3 600.0,715.0 C614.2,706.7 621.7,698.8 630.0,695.0 C638.3,691.2 643.0,691.2 650.0,692.0 C657.0,692.8 664.5,698.5 672.0,700.0 C679.5,701.5 690.0,697.7 695.0,701.0 C700.0,704.3 700.8,712.3 702.0,720.0 C703.2,727.7 704.8,738.7 702.0,747.0 C699.2,755.3 689.5,762.8 685.0,770.0 C680.5,777.2 678.0,779.2 675.0,790.0 C672.0,800.8 671.2,822.5 667.0,835.0 C662.8,847.5 655.0,848.3 650.0,865.0 C645.0,881.7 640.3,914.2 637.0,935.0 C633.7,955.8 677.8,980.8 630.0,990.0 C582.2,999.2 395.0,999.2 350.0,990.0Z"/>
<path fill="#000" d="M903,201 L947,209 L975,218 L982,238 L958,232 L930,219 L902,207Z"/>
<path fill="none" stroke="#000" stroke-width="10.5" d="M170.0,935.0 C168.3,931.3 163.7,920.5 160.0,913.0 C156.3,905.5 151.0,899.3 148.0,890.0 C145.0,880.7 142.8,869.5 142.0,857.0 C141.2,844.5 141.2,827.5 143.0,815.0 C144.8,802.5 148.5,790.8 153.0,782.0 C157.5,773.2 163.3,769.0 170.0,762.0 C176.7,755.0 185.5,747.5 193.0,740.0 C200.5,732.5 206.3,725.3 215.0,717.0 C223.7,708.7 234.2,697.8 245.0,690.0 C255.8,682.2 268.3,677.5 280.0,670.0 C291.7,662.5 305.0,652.5 315.0,645.0 C325.0,637.5 333.3,631.7 340.0,625.0 C346.7,618.3 350.8,611.3 355.0,605.0 C359.2,598.7 361.7,594.2 365.0,587.0 C368.3,579.8 371.7,571.5 375.0,562.0 C378.3,552.5 382.8,540.3 385.0,530.0 C387.2,519.7 387.0,510.0 388.0,500.0 C389.0,490.0 389.5,481.2 391.0,470.0 C392.5,458.8 394.3,446.8 397.0,433.0 C399.7,419.2 402.7,402.5 407.0,387.0 C411.3,371.5 416.3,355.0 423.0,340.0 C429.7,325.0 438.7,309.8 447.0,297.0 C455.3,284.2 463.3,272.5 473.0,263.0 C482.7,253.5 492.7,247.3 505.0,240.0 C517.3,232.7 532.8,226.2 547.0,219.0 C561.2,211.8 582.8,200.7 590.0,197.0"/>
<path fill="none" stroke="#000" stroke-width="9" d="M590.0,199.0 C596.7,198.8 617.8,198.2 630.0,198.0 C642.2,197.8 650.5,199.0 663.0,198.0 C675.5,197.0 692.2,193.7 705.0,192.0 C717.8,190.3 724.2,188.0 740.0,188.0 C755.8,188.0 776.7,190.7 800.0,192.0 C823.3,193.3 862.0,195.7 880.0,196.0 C898.0,196.3 903.3,194.3 908.0,194.0"/>
<path fill="none" stroke="#000" stroke-width="10" d="M580.0,198.0 C582.0,195.8 586.5,190.2 592.0,185.0 C597.5,179.8 606.0,172.8 613.0,167.0 C620.0,161.2 627.7,154.5 634.0,150.0 C640.3,145.5 645.5,141.8 651.0,140.0 C656.5,138.2 662.2,138.7 667.0,139.0 C671.8,139.3 675.8,139.5 680.0,142.0 C684.2,144.5 687.8,149.2 692.0,154.0 C696.2,158.8 700.8,165.3 705.0,171.0 C709.2,176.7 713.5,184.5 717.0,188.0 C720.5,191.5 724.5,191.3 726.0,192.0"/>
<path fill="none" stroke="#000" stroke-width="8" d="M638.0,158.0 C640.8,159.7 650.8,164.5 655.0,168.0 C659.2,171.5 660.8,174.8 663.0,179.0 C665.2,183.2 667.2,190.7 668.0,193.0"/>
<path fill="none" stroke="#000" stroke-width="12" d="M908.0,194.0 C911.7,190.3 923.0,176.8 930.0,172.0 C937.0,167.2 945.0,166.2 950.0,165.0 C955.0,163.8 954.7,165.5 960.0,165.0 C965.3,164.5 974.2,164.5 982.0,162.0 C989.8,159.5 999.0,152.8 1007.0,150.0 C1015.0,147.2 1023.2,145.5 1030.0,145.0 C1036.8,144.5 1041.7,145.0 1048.0,147.0 C1054.3,149.0 1062.2,153.2 1068.0,157.0 C1073.8,160.8 1079.0,164.5 1083.0,170.0 C1087.0,175.5 1090.3,182.5 1092.0,190.0 C1093.7,197.5 1093.0,206.7 1093.0,215.0 C1093.0,223.3 1093.7,231.7 1092.0,240.0 C1090.3,248.3 1085.8,258.0 1083.0,265.0 C1080.2,272.0 1077.5,276.2 1075.0,282.0 C1072.5,287.8 1070.3,290.2 1068.0,300.0 C1065.7,309.8 1061.8,330.5 1061.0,341.0 C1060.2,351.5 1061.5,355.8 1063.0,363.0 C1064.5,370.2 1068.2,374.5 1070.0,384.0 C1071.8,393.5 1073.2,408.0 1074.0,420.0 C1074.8,432.0 1075.0,448.0 1075.0,456.0 C1075.0,464.0 1074.8,461.8 1074.0,468.0 C1073.2,474.2 1068.7,484.2 1070.0,493.0 C1071.3,501.8 1078.3,509.8 1082.0,521.0 C1085.7,532.2 1089.7,548.5 1092.0,560.0 C1094.3,571.5 1095.3,580.0 1096.0,590.0 C1096.7,600.0 1096.3,608.5 1096.0,620.0 C1095.7,631.5 1095.0,642.8 1094.0,659.0 C1093.0,675.2 1092.3,697.8 1090.0,717.0 C1087.7,736.2 1084.0,756.8 1080.0,774.0 C1076.0,791.2 1072.0,804.8 1066.0,820.0 C1060.0,835.2 1051.3,853.0 1044.0,865.0 C1036.7,877.0 1029.3,884.3 1022.0,892.0 C1014.7,899.7 1006.2,903.8 1000.0,911.0 C993.8,918.2 987.5,931.0 985.0,935.0"/>
<path fill="none" stroke="#000" stroke-width="9" d="M985.0,170.0 C987.7,173.3 997.2,183.3 1001.0,190.0 C1004.8,196.7 1007.5,204.8 1008.0,210.0 C1008.5,215.2 1006.5,218.8 1004.0,221.0 C1001.5,223.2 997.0,223.2 993.0,223.0 C989.0,222.8 987.7,222.2 980.0,220.0 C972.3,217.8 958.2,212.8 947.0,210.0 C935.8,207.2 920.0,204.7 913.0,203.0 C906.0,201.3 906.3,200.5 905.0,200.0"/>
<path fill="none" stroke="#000" stroke-width="10" d="M902.0,206.0 C906.7,208.2 920.7,215.0 930.0,219.0 C939.3,223.0 949.7,226.3 958.0,230.0 C966.3,233.7 973.8,236.8 980.0,241.0 C986.2,245.2 989.2,248.2 995.0,255.0 C1000.8,261.8 1010.0,273.7 1015.0,282.0 C1020.0,290.3 1021.0,294.8 1025.0,305.0 C1029.0,315.2 1035.5,331.8 1039.0,343.0 C1042.5,354.2 1044.0,361.2 1046.0,372.0 C1048.0,382.8 1049.7,396.0 1051.0,408.0 C1052.3,420.0 1053.5,432.0 1054.0,444.0 C1054.5,456.0 1054.8,469.5 1054.0,480.0 C1053.2,490.5 1051.0,500.2 1049.0,507.0 C1047.0,513.8 1043.7,512.2 1042.0,521.0 C1040.3,529.8 1041.5,547.3 1039.0,560.0 C1036.5,572.7 1030.2,583.7 1027.0,597.0 C1023.8,610.3 1022.8,624.5 1020.0,640.0 C1017.2,655.5 1013.8,673.3 1010.0,690.0 C1006.2,706.7 998.5,723.3 997.0,740.0 C995.5,756.7 1003.0,778.0 1001.0,790.0 C999.0,802.0 990.7,804.2 985.0,812.0 C979.3,819.8 970.8,827.3 967.0,837.0 C963.2,846.7 963.7,853.7 962.0,870.0 C960.3,886.3 957.8,924.2 957.0,935.0"/>
<path fill="none" stroke="#000" stroke-width="10" d="M967.0,837.0 C960.0,841.7 935.3,856.2 925.0,865.0 C914.7,873.8 910.3,878.3 905.0,890.0 C899.7,901.7 895.0,927.5 893.0,935.0"/>
<path fill="none" stroke="#000" stroke-width="9" d="M170.0,762.0 C169.7,769.5 168.3,792.7 168.0,807.0 C167.7,821.3 166.3,837.0 168.0,848.0 C169.7,859.0 173.5,864.7 178.0,873.0 C182.5,881.3 189.2,890.2 195.0,898.0 C200.8,905.8 208.0,913.8 213.0,920.0 C218.0,926.2 223.0,932.5 225.0,935.0"/>
<path fill="none" stroke="#000" stroke-width="9" d="M360.0,935.0 C370.0,923.3 404.0,882.8 420.0,865.0 C436.0,847.2 440.2,843.8 456.0,828.0 C471.8,812.2 500.2,783.8 515.0,770.0 C529.8,756.2 530.8,754.2 545.0,745.0 C559.2,735.8 585.8,723.3 600.0,715.0 C614.2,706.7 621.7,698.8 630.0,695.0 C638.3,691.2 643.0,691.2 650.0,692.0 C657.0,692.8 664.5,698.5 672.0,700.0 C679.5,701.5 690.0,697.7 695.0,701.0 C700.0,704.3 700.8,712.3 702.0,720.0 C703.2,727.7 704.8,738.7 702.0,747.0 C699.2,755.3 689.5,762.8 685.0,770.0 C680.5,777.2 678.0,779.2 675.0,790.0 C672.0,800.8 671.2,822.5 667.0,835.0 C662.8,847.5 655.0,848.3 650.0,865.0 C645.0,881.7 639.2,923.3 637.0,935.0"/>
<path fill="#000" d="M931.0,176.0 C933.5,173.5 940.7,171.5 945.0,171.0 C949.3,170.5 955.0,171.0 957.0,173.0 C959.0,175.0 959.7,180.7 957.0,183.0 C954.3,185.3 945.5,186.5 941.0,187.0 C936.5,187.5 931.7,187.8 930.0,186.0 C928.3,184.2 928.5,178.5 931.0,176.0Z"/>
<path fill="#392b2a" stroke="#000" stroke-width="8.5" d="M532.0,252.0 C532.7,247.8 538.7,241.7 545.0,238.0 C551.3,234.3 561.7,233.0 570.0,230.0 C578.3,227.0 586.7,222.2 595.0,220.0 C603.3,217.8 611.7,217.2 620.0,217.0 C628.3,216.8 638.7,217.8 645.0,219.0 C651.3,220.2 654.8,221.5 658.0,224.0 C661.2,226.5 663.0,228.8 664.0,234.0 C665.0,239.2 664.3,248.0 664.0,255.0 C663.7,262.0 663.8,271.3 662.0,276.0 C660.2,280.7 657.2,282.0 653.0,283.0 C648.8,284.0 642.5,283.2 637.0,282.0 C631.5,280.8 625.7,278.2 620.0,276.0 C614.3,273.8 610.0,270.3 603.0,269.0 C596.0,267.7 586.3,268.2 578.0,268.0 C569.7,267.8 559.2,268.8 553.0,268.0 C546.8,267.2 544.5,265.7 541.0,263.0 C537.5,260.3 531.3,256.2 532.0,252.0Z"/>
<path fill="none" stroke="#bdb3b1" stroke-width="1.4" d="M537.1,252.8 C537.7,250.1 541.8,245.5 547.6,242.5 C553.4,239.5 563.7,237.8 571.8,234.9 C579.9,232.0 588.2,227.1 596.3,225.0 C604.3,222.9 612.1,222.3 620.1,222.2 C628.1,222.0 638.3,223.1 644.1,224.1 C649.9,225.1 652.3,226.3 654.8,228.1 C657.3,229.9 658.2,230.6 658.9,235.0 C659.6,239.4 659.1,248.3 658.8,254.8 C658.5,261.3 658.4,270.2 657.2,274.1 C656.0,278.0 655.0,277.4 651.8,277.9 C648.6,278.4 643.1,278.0 638.1,276.9 C633.1,275.8 627.6,273.3 621.9,271.1 C616.2,268.9 611.3,265.3 604.0,263.9 C596.7,262.5 586.5,263.0 578.1,262.8 C569.7,262.6 559.4,263.5 553.7,262.8 C548.1,262.1 547.0,260.6 544.2,258.9 C541.4,257.2 536.5,255.5 537.1,252.8Z"/>
<path fill="#392b2a" stroke="#000" stroke-width="8.5" d="M819.0,215.0 C821.8,210.8 828.7,212.0 837.0,212.0 C845.3,212.0 859.5,213.0 869.0,215.0 C878.5,217.0 885.7,220.3 894.0,224.0 C902.3,227.7 911.8,232.3 919.0,237.0 C926.2,241.7 932.5,247.0 937.0,252.0 C941.5,257.0 944.8,261.7 946.0,267.0 C947.2,272.3 946.5,279.2 944.0,284.0 C941.5,288.8 936.3,292.5 931.0,296.0 C925.7,299.5 917.2,304.5 912.0,305.0 C906.8,305.5 904.2,302.3 900.0,299.0 C895.8,295.7 892.2,289.7 887.0,285.0 C881.8,280.3 876.2,274.3 869.0,271.0 C861.8,267.7 850.7,267.5 844.0,265.0 C837.3,262.5 833.0,260.7 829.0,256.0 C825.0,251.3 821.7,243.8 820.0,237.0 C818.3,230.2 816.2,219.2 819.0,215.0Z"/>
<path fill="none" stroke="#bdb3b1" stroke-width="1.4" d="M823.3,217.9 C825.3,214.8 829.6,216.8 837.0,217.2 C844.4,217.6 858.8,218.2 867.9,220.1 C877.0,222.0 883.8,225.2 891.9,228.8 C900.0,232.4 909.3,237.0 916.2,241.4 C923.1,245.8 929.0,251.1 933.1,255.5 C937.2,259.9 939.9,263.8 940.9,268.1 C941.9,272.5 941.5,277.7 939.4,281.6 C937.3,285.5 932.8,288.7 928.1,291.7 C923.5,294.7 915.6,299.3 911.5,299.8 C907.4,300.3 906.7,298.0 903.2,294.9 C899.7,291.8 895.8,285.9 890.5,281.1 C885.2,276.3 878.7,269.8 871.2,266.3 C863.8,262.8 852.2,262.4 845.8,260.1 C839.4,257.8 836.3,256.6 832.9,252.6 C829.5,248.5 826.7,241.6 825.1,235.8 C823.5,230.0 821.3,221.0 823.3,217.9Z"/>
<circle cx="955" cy="222" r="5" fill="none" stroke="#e00" stroke-width="3"/>
<circle cx="971" cy="230" r="9" fill="rgba(235,235,235,.75)" stroke="#fff" stroke-width="1.5"/>
</g></g><!--/draw-->
</svg>
</body></html>
